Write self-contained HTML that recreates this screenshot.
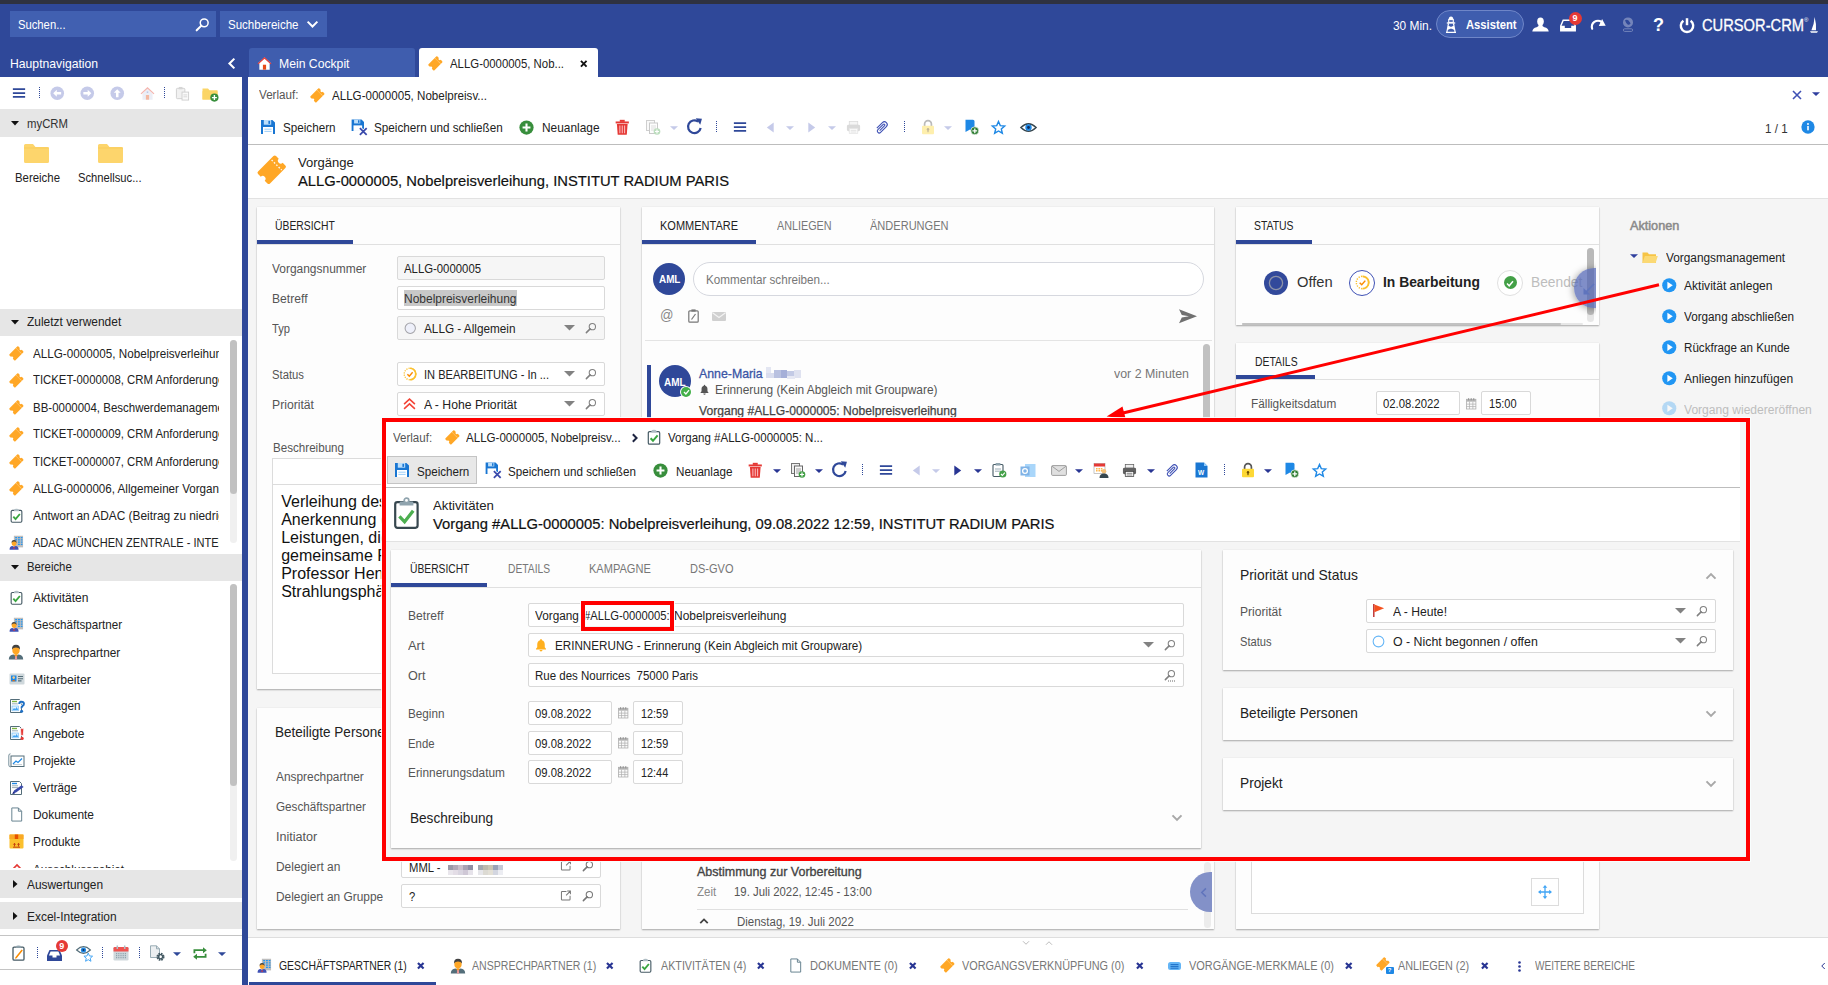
<!DOCTYPE html><html><head><meta charset="utf-8"><title>CURSOR-CRM</title><style>
html,body{margin:0;padding:0;}
body{width:1828px;height:985px;overflow:hidden;position:relative;background:#f5f5f5;font-family:"Liberation Sans",sans-serif;}
.a{position:absolute;}
.t{position:absolute;white-space:nowrap;transform-origin:0 50%;}
svg{overflow:visible}
</style></head><body>
<div class="a" style="left:0px;top:0px;width:1828px;height:4px;background:#2f3240;"></div>
<div class="a" style="left:0px;top:4px;width:1828px;height:73px;background:#2f4899;"></div>
<div class="a" style="left:10px;top:11px;width:206px;height:26px;background:#4160b1;"></div>
<div class="t" style="left:18px;top:18px;font-size:13px;line-height:13px;color:#fff;transform:scaleX(0.8648);">Suchen...</div>
<svg class="a" style="left:194.50px;top:16.50px;" width="15" height="15" viewBox="0 0 16 16"><circle cx="9.8" cy="6.2" r="4.2" fill="none" stroke="#fff" stroke-width="1.6"/><path d="M6.8 9.2 1.8 14.2" stroke="#fff" stroke-width="2.2" stroke-linecap="round"/></svg>
<div class="a" style="left:220px;top:11px;width:107px;height:26px;background:#4160b1;"></div>
<div class="t" style="left:227.5px;top:18px;font-size:13px;line-height:13px;color:#fff;transform:scaleX(0.8867);">Suchbereiche</div>
<svg class="a" style="left:306.00px;top:17.50px;" width="13" height="13" viewBox="0 0 16 16"><path d="M2 4.5 8 10.5 14 4.5" fill="none" stroke="#fff" stroke-width="2.4" transform="rotate(0 8 8)"/></svg>
<div class="t" style="left:1392.6px;top:19px;font-size:13px;line-height:13px;color:#fff;transform:scaleX(0.9148);">30 Min.</div>
<div class="a" style="left:1436px;top:10px;width:88px;height:28px;background:#3f5dae;border:1px solid #6f86c8;box-sizing:border-box;border-radius:14px;"></div>
<svg class="a" style="left:1445.00px;top:15.80px;" width="12" height="17" viewBox="0 0 12 17"><path d="M3.600 3.600Q3.800 .700 6 .600 8.200 .700 8.400 3.600z" fill="#fff"/><rect x="3.700" y="3.600" width="4.600" height="2.800" fill="none" stroke="#fff" stroke-width="1.100"/><path d="M1.800 7h8.400" stroke="#fff" stroke-width="1.300"/><path d="M3.500 7.400 1.900 16M8.500 7.400 10.100 16M1 16.300h10M3.200 10.200 9.600 13.400M8.800 10.200 2.400 13.400" fill="none" stroke="#fff" stroke-width="1.200"/></svg>
<div class="t" style="left:1465.5px;top:18px;font-size:13px;line-height:13px;color:#fff;transform:scaleX(0.8629);font-weight:700;">Assistent</div>
<svg class="a" style="left:1531.50px;top:16.80px;" width="17" height="15" viewBox="0 0 17 15"><ellipse cx="8.500" cy="4.600" rx="3.300" ry="4" fill="#fff"/><path d="M.3 14.600Q.6 11 4.600 10.200 6.800 9.600 6.800 7.500h3.400Q10.200 9.600 12.400 10.200 16.400 11 16.700 14.600z" fill="#fff"/></svg>
<svg class="a" style="left:1559.50px;top:19.00px;" width="16" height="13" viewBox="0 0 16 13"><path d="M3.200 1.200h9.600l2.400 5.600v5H.8v-5z" fill="none" stroke="#fff" stroke-width="1.500"/><path d="M.8 6.800h4v2.100h6.400V6.800h4v5H.8z" fill="#fff"/></svg>
<div class="a" style="left:1569px;top:12px;width:12.5px;height:12.5px;background:#e53935;border-radius:7px;"></div>
<div class="t" style="left:1572.6px;top:14px;font-size:9px;line-height:9px;color:#fff;transform:scaleX(1.0000);font-weight:700;">9</div>
<svg class="a" style="left:1590.50px;top:18.00px;" width="15" height="13" viewBox="0 0 15 13"><g transform="rotate(16 7.500 6.500)"><path d="M2.600 12.400Q.2 8.600 2.800 5.200 5.600 1.800 10 3.200" fill="none" stroke="#fff" stroke-width="2.100" stroke-linecap="round"/><path d="M9.400 .2 14.800 5.800 8.200 7.800z" fill="#fff"/></g></svg>
<svg class="a" style="left:1621.50px;top:16.50px;" width="12" height="15" viewBox="0 0 12 15"><g opacity=".33"><circle cx="6" cy="5.400" r="5" fill="#fff"/><path d="M3 3.200Q5 2 6.400 3.400T8.600 6.200Q7 8.600 5.400 7.200T3 3.200z" fill="#2f4899"/><rect x="1.400" y="11.800" width="9.200" height="2.600" rx="1.200" fill="none" stroke="#fff" stroke-width="1"/></g></svg>
<div class="t" style="left:1652.5px;top:15px;font-size:19px;line-height:19px;color:#fff;transform:scaleX(0.9500);font-weight:700;">?</div>
<svg class="a" style="left:1678.70px;top:16.80px;" width="16" height="16" viewBox="0 0 16 16"><path d="M4.400 3.800A6.200 6.200 0 1 0 11.600 3.800" fill="none" stroke="#fff" stroke-width="2.400"/><path d="M8 1.200v7" stroke="#fff" stroke-width="2.500"/></svg>
<div class="t" style="left:1701.5px;top:17px;font-size:16.5px;line-height:16.5px;color:#fff;transform:scaleX(0.8903);-webkit-text-stroke:0.3px #fff;">CURSOR-CRM</div>
<div class="t" style="left:1804px;top:17px;font-size:6px;line-height:6px;color:#fff;transform:scaleX(1.0000);">®</div>
<svg class="a" style="left:1809.50px;top:17.00px;" width="8" height="16" viewBox="0 0 8 16"><path d="M4.6 0Q6.5 7 6 13.2H1.4Q4.2 7 4.6 0z" fill="#fff"/><path d="M0 14.2h8l-1 1.6H1z" fill="#fff"/></svg>
<div class="t" style="left:10.3px;top:57px;font-size:13px;line-height:13px;color:#fff;transform:scaleX(0.9376);">Hauptnavigation</div>
<svg class="a" style="left:225.00px;top:57.00px;" width="13" height="13" viewBox="0 0 16 16"><path d="M2 4.5 8 10.5 14 4.5" fill="none" stroke="#fff" stroke-width="2.6" transform="rotate(90 8 8)"/></svg>
<div class="a" style="left:249px;top:48px;width:166px;height:29px;background:#3f5dae;border-radius:3px 3px 0 0;"></div>
<svg class="a" style="left:257.00px;top:56.00px;" width="15" height="15" viewBox="0 0 16 16"><path d="M8 1.200 0.800 8h1.700v6.600h11V8h1.700z" fill="#fff"/><path d="M8 1 .6 8l.9.9L8 2.800l6.500 6.100.9-.9z" fill="#e53935"/><rect x="6.300" y="9.300" width="3.400" height="5.300" fill="#e64a19"/></svg>
<div class="t" style="left:279px;top:57px;font-size:13px;line-height:13px;color:#fff;transform:scaleX(0.9382);">Mein Cockpit</div>
<div class="a" style="left:419px;top:48px;width:179px;height:29px;background:#fff;border-radius:3px 3px 0 0;"></div>
<svg class="a" style="left:427.64px;top:56.14px;" width="14.723926380368097" height="14.723926380368097" viewBox="0 0 16 16"><g transform="rotate(-45 8 8)"><path d="M2.1 3.4H13.9Q14.9 3.4 14.9 4.4V6.5A1.5 1.5 0 0 0 14.9 9.5V11.6Q14.9 12.6 13.9 12.6H2.1Q1.1 12.6 1.1 11.6V9.5A1.5 1.5 0 0 0 1.1 6.5V4.4Q1.1 3.4 2.1 3.4Z" fill="#ffa726"/><path d="M11.7 4.2v7.8" stroke="#fff" stroke-width=".75" stroke-dasharray=".9 .9" opacity=".9"/></g></svg>
<div class="t" style="left:449.5px;top:57px;font-size:13px;line-height:13px;color:#222;transform:scaleX(0.8763);">ALLG-0000005, Nob...</div>
<svg class="a" style="left:579.55px;top:59.75px;" width="7.5" height="7.5" viewBox="0 0 8 8"><path d="M1 1 7 7M7 1 1 7" stroke="#111" stroke-width="2"/></svg>
<div class="a" style="left:0px;top:77px;width:242px;height:908px;background:#fff;"></div>
<div class="a" style="left:242px;top:77px;width:6px;height:908px;background:#2f4899;"></div>
<svg class="a" style="left:11.70px;top:85.60px;" width="14" height="14" viewBox="0 0 16 16"><path d="M1 3.5h14M1 8h14M1 12.5h14" stroke="#2f4899" stroke-width="2"/></svg>
<div class="a" style="left:39px;top:87px;width:1px;height:11px;background:repeating-linear-gradient(to bottom,#2f4899 0,#2f4899 1px,transparent 1px,transparent 2px)"></div>
<svg class="a" style="left:49.75px;top:85.75px;" width="14.5" height="14.5" viewBox="0 0 16 16"><circle cx="8" cy="8" r="7.5" fill="#c5cae9"/><path d="M3.5 8 7.5 4.2v2.4h4.8v2.8H7.5v2.4z" fill="#fff" transform="rotate(0 8 8)"/></svg>
<svg class="a" style="left:79.75px;top:85.75px;" width="14.5" height="14.5" viewBox="0 0 16 16"><circle cx="8" cy="8" r="7.5" fill="#c5cae9"/><path d="M3.5 8 7.5 4.2v2.4h4.8v2.8H7.5v2.4z" fill="#fff" transform="rotate(180 8 8)"/></svg>
<svg class="a" style="left:109.75px;top:85.75px;" width="14.5" height="14.5" viewBox="0 0 16 16"><circle cx="8" cy="8" r="7.5" fill="#c5cae9"/><path d="M3.5 8 7.5 4.2v2.4h4.8v2.8H7.5v2.4z" fill="#fff" transform="rotate(90 8 8)"/></svg>
<svg class="a" style="left:139.50px;top:85.50px;" width="15" height="15" viewBox="0 0 16 16"><path d="M2.600 8V14.600h10.800V8L8 2.800z" fill="#eceef6"/><path d="M8 1 .6 8l.9.9L8 2.800l6.500 6.100.9-.9z" fill="#f4b6b0"/><rect x="6.300" y="9.600" width="3.400" height="5" fill="#f3b9a3"/><rect x="7.200" y="5.800" width="1.600" height="1.600" fill="#b9c6e6"/></svg>
<div class="a" style="left:164px;top:87px;width:1px;height:11px;background:repeating-linear-gradient(to bottom,#2f4899 0,#2f4899 1px,transparent 1px,transparent 2px)"></div>
<svg class="a" style="left:174.50px;top:86.00px;" width="15" height="15" viewBox="0 0 16 16"><rect x="1.5" y="2.5" width="9" height="11" rx="1" fill="#f1f1f1" stroke="#cfcfcf"/><rect x="4" y="1" width="4" height="2.5" fill="#d5d5d5"/><rect x="7.5" y="6.5" width="7" height="8.5" fill="#fafafa" stroke="#cfcfcf"/><path d="M9 9.5h4M9 11.5h4" stroke="#d5d5d5"/></svg>
<svg class="a" style="left:202.00px;top:85.50px;" width="16" height="16" viewBox="0 0 16 16"><g opacity="1"><path d="M.5 2.5h5.5l1.5 1.8H15.5V13.5H.5z" fill="#fbd567"/><path d="M.5 5.2h15V13.5H.5z" fill="#fbd567"/></g><circle cx="12.4" cy="11.6" r="4.1" fill="#388e3c"/><path d="M12.4 9.1v5M9.900 11.600h5" stroke="#fff" stroke-width="1.4"/></svg>
<div class="a" style="left:0px;top:109px;width:242px;height:28px;background:#e6e6e6;"></div>
<svg class="a" style="left:10.50px;top:119.00px;" width="8" height="8" viewBox="0 0 8 8"><path d="M0 2h8L4 6.5z" fill="#111" transform="rotate(0 4 4)"/></svg>
<div class="t" style="left:26.7px;top:117px;font-size:13px;line-height:13px;color:#333;transform:scaleX(0.8735);">myCRM</div>
<svg class="a" style="left:24.00px;top:143.00px;" width="25" height="21" viewBox="0 0 25 21"><path d="M0 2.5Q0 1 1.5 1H9l2.5 3H23.5Q25 4 25 5.5V18.5Q25 20 23.5 20H1.5Q0 20 0 18.5z" fill="#fdd56c"/><path d="M0 5h25" stroke="#f7ca57" stroke-width=".8"/></svg>
<svg class="a" style="left:98.00px;top:143.00px;" width="25" height="21" viewBox="0 0 25 21"><path d="M0 2.5Q0 1 1.5 1H9l2.5 3H23.5Q25 4 25 5.5V18.5Q25 20 23.5 20H1.5Q0 20 0 18.5z" fill="#fdd56c"/><path d="M0 5h25" stroke="#f7ca57" stroke-width=".8"/></svg>
<div class="t" style="left:14.5px;top:172px;font-size:12.5px;line-height:12.5px;color:#222;transform:scaleX(0.9122);">Bereiche</div>
<div class="t" style="left:78px;top:172px;font-size:12.5px;line-height:12.5px;color:#222;transform:scaleX(0.8961);">Schnellsuc...</div>
<div class="a" style="left:0px;top:308.5px;width:242px;height:27px;background:#e6e6e6;"></div>
<svg class="a" style="left:10.50px;top:318.00px;" width="8" height="8" viewBox="0 0 8 8"><path d="M0 2h8L4 6.5z" fill="#111" transform="rotate(0 4 4)"/></svg>
<div class="t" style="left:26.8px;top:315px;font-size:13px;line-height:13px;color:#222;transform:scaleX(0.9181);">Zuletzt verwendet</div>
<div class="a" style="left:0;top:336px;width:218.5px;height:217px;overflow:hidden">
<div class="t" style="left:32.5px;top:11px;font-size:13px;line-height:13px;color:#222;transform:scaleX(0.8986);">ALLG-0000005, Nobelpreisverleihung</div>
<div class="t" style="left:32.5px;top:37px;font-size:13px;line-height:13px;color:#222;transform:scaleX(0.8738);">TICKET-0000008, CRM Anforderungen</div>
<div class="t" style="left:32.5px;top:65px;font-size:13px;line-height:13px;color:#222;transform:scaleX(0.8833);">BB-0000004, Beschwerdemanagement</div>
<div class="t" style="left:32.5px;top:91px;font-size:13px;line-height:13px;color:#222;transform:scaleX(0.8738);">TICKET-0000009, CRM Anforderungen</div>
<div class="t" style="left:32.5px;top:119px;font-size:13px;line-height:13px;color:#222;transform:scaleX(0.8738);">TICKET-0000007, CRM Anforderungen</div>
<div class="t" style="left:32.5px;top:146px;font-size:13px;line-height:13px;color:#222;transform:scaleX(0.8935);">ALLG-0000006, Allgemeiner Vorgang</div>
<div class="t" style="left:32.5px;top:173px;font-size:13px;line-height:13px;color:#222;transform:scaleX(0.9126);">Antwort an ADAC (Beitrag zu niedrig)</div>
<div class="t" style="left:32.5px;top:200px;font-size:13px;line-height:13px;color:#222;transform:scaleX(0.8476);">ADAC MÜNCHEN ZENTRALE - INTER</div>
</div>
<svg class="a" style="left:8.84px;top:345.74px;" width="14.723926380368097" height="14.723926380368097" viewBox="0 0 16 16"><g transform="rotate(-45 8 8)"><path d="M2.1 3.4H13.9Q14.9 3.4 14.9 4.4V6.5A1.5 1.5 0 0 0 14.9 9.5V11.6Q14.9 12.6 13.9 12.6H2.1Q1.1 12.6 1.1 11.6V9.5A1.5 1.5 0 0 0 1.1 6.5V4.4Q1.1 3.4 2.1 3.4Z" fill="#ffa726"/><path d="M11.7 4.2v7.8" stroke="#fff" stroke-width=".75" stroke-dasharray=".9 .9" opacity=".9"/></g></svg>
<svg class="a" style="left:8.84px;top:372.54px;" width="14.723926380368097" height="14.723926380368097" viewBox="0 0 16 16"><g transform="rotate(-45 8 8)"><path d="M2.1 3.4H13.9Q14.9 3.4 14.9 4.4V6.5A1.5 1.5 0 0 0 14.9 9.5V11.6Q14.9 12.6 13.9 12.6H2.1Q1.1 12.6 1.1 11.6V9.5A1.5 1.5 0 0 0 1.1 6.5V4.4Q1.1 3.4 2.1 3.4Z" fill="#ffa726"/><path d="M11.7 4.2v7.8" stroke="#fff" stroke-width=".75" stroke-dasharray=".9 .9" opacity=".9"/></g></svg>
<svg class="a" style="left:8.84px;top:399.74px;" width="14.723926380368097" height="14.723926380368097" viewBox="0 0 16 16"><g transform="rotate(-45 8 8)"><path d="M2.1 3.4H13.9Q14.9 3.4 14.9 4.4V6.5A1.5 1.5 0 0 0 14.9 9.5V11.6Q14.9 12.6 13.9 12.6H2.1Q1.1 12.6 1.1 11.6V9.5A1.5 1.5 0 0 0 1.1 6.5V4.4Q1.1 3.4 2.1 3.4Z" fill="#ffa726"/><path d="M11.7 4.2v7.8" stroke="#fff" stroke-width=".75" stroke-dasharray=".9 .9" opacity=".9"/></g></svg>
<svg class="a" style="left:8.84px;top:426.54px;" width="14.723926380368097" height="14.723926380368097" viewBox="0 0 16 16"><g transform="rotate(-45 8 8)"><path d="M2.1 3.4H13.9Q14.9 3.4 14.9 4.4V6.5A1.5 1.5 0 0 0 14.9 9.5V11.6Q14.9 12.6 13.9 12.6H2.1Q1.1 12.6 1.1 11.6V9.5A1.5 1.5 0 0 0 1.1 6.5V4.4Q1.1 3.4 2.1 3.4Z" fill="#ffa726"/><path d="M11.7 4.2v7.8" stroke="#fff" stroke-width=".75" stroke-dasharray=".9 .9" opacity=".9"/></g></svg>
<svg class="a" style="left:8.84px;top:453.74px;" width="14.723926380368097" height="14.723926380368097" viewBox="0 0 16 16"><g transform="rotate(-45 8 8)"><path d="M2.1 3.4H13.9Q14.9 3.4 14.9 4.4V6.5A1.5 1.5 0 0 0 14.9 9.5V11.6Q14.9 12.6 13.9 12.6H2.1Q1.1 12.6 1.1 11.6V9.5A1.5 1.5 0 0 0 1.1 6.5V4.4Q1.1 3.4 2.1 3.4Z" fill="#ffa726"/><path d="M11.7 4.2v7.8" stroke="#fff" stroke-width=".75" stroke-dasharray=".9 .9" opacity=".9"/></g></svg>
<svg class="a" style="left:8.84px;top:481.34px;" width="14.723926380368097" height="14.723926380368097" viewBox="0 0 16 16"><g transform="rotate(-45 8 8)"><path d="M2.1 3.4H13.9Q14.9 3.4 14.9 4.4V6.5A1.5 1.5 0 0 0 14.9 9.5V11.6Q14.9 12.6 13.9 12.6H2.1Q1.1 12.6 1.1 11.6V9.5A1.5 1.5 0 0 0 1.1 6.5V4.4Q1.1 3.4 2.1 3.4Z" fill="#ffa726"/><path d="M11.7 4.2v7.8" stroke="#fff" stroke-width=".75" stroke-dasharray=".9 .9" opacity=".9"/></g></svg>
<svg class="a" style="left:8.70px;top:508.00px;" width="15" height="15" viewBox="0 0 16 16"><rect x="2.300" y="2.600" width="11.400" height="12.600" rx="1.300" fill="#fff" stroke="#455a64" stroke-width="1.200"/><path d="M5.400 3.400V2Q5.400 .700 8 .700T10.600 2V3.400z" fill="#b0bec5"/><path d="M4.600 9.200 7 11.800 11.600 6.400" fill="none" stroke="#3aa640" stroke-width="2"/></svg>
<svg class="a" style="left:8.70px;top:535.20px;" width="15" height="15" viewBox="0 0 16 16"><rect x="5.200" y=".800" width="9.800" height="12.400" fill="#bdbdbd"/><path d="M6.600 2.800h2M9.600 2.800h2M12.600 2.800h1.800M9.600 5.200h2M12.600 5.200h1.800M9.600 7.600h2M12.600 7.600h1.800M9.600 10h2M12.600 10h1.800M6.600 5.200h2" stroke="#2196f3" stroke-width="1.200"/><path d="M.6 15.600Q.6 12 3.600 11.800L5.400 12.400 7.200 11.800Q10.200 12 10.200 15.600z" fill="#3f51b5"/><path d="M5 12.400h.8l.3 2.600H4.700z" fill="#e53935"/><ellipse cx="5.400" cy="8.800" rx="2.500" ry="2.900" fill="#ffa726"/><path d="M2.800 8.400Q2.600 5.400 5.400 5.400T8 8.400Q7.200 7 5.400 7T2.800 8.400z" fill="#424242"/></svg>
<div class="a" style="left:229.5px;top:340px;width:7.5px;height:203px;background:#f0f0f0;border-radius:4px;"></div>
<div class="a" style="left:229.5px;top:340px;width:7.5px;height:153.5px;background:#c1c1c1;border-radius:4px;"></div>
<div class="a" style="left:0px;top:553.5px;width:242px;height:27px;background:#e6e6e6;"></div>
<svg class="a" style="left:10.50px;top:563.00px;" width="8" height="8" viewBox="0 0 8 8"><path d="M0 2h8L4 6.5z" fill="#111" transform="rotate(0 4 4)"/></svg>
<div class="t" style="left:26.8px;top:560px;font-size:13px;line-height:13px;color:#222;transform:scaleX(0.8711);">Bereiche</div>
<svg class="a" style="left:8.90px;top:589.80px;" width="15" height="15" viewBox="0 0 16 16"><rect x="2.300" y="2.600" width="11.400" height="12.600" rx="1.300" fill="#fff" stroke="#455a64" stroke-width="1.200"/><path d="M5.400 3.400V2Q5.400 .700 8 .700T10.600 2V3.400z" fill="#b0bec5"/><path d="M4.600 9.200 7 11.800 11.600 6.400" fill="none" stroke="#3aa640" stroke-width="2"/></svg>
<div class="t" style="left:32.8px;top:591px;font-size:13px;line-height:13px;color:#222;transform:scaleX(0.9254);">Aktivitäten</div>
<svg class="a" style="left:8.90px;top:616.90px;" width="15" height="15" viewBox="0 0 16 16"><rect x="5.200" y=".800" width="9.800" height="12.400" fill="#bdbdbd"/><path d="M6.600 2.800h2M9.600 2.800h2M12.600 2.800h1.800M9.600 5.200h2M12.600 5.200h1.800M9.600 7.600h2M12.600 7.600h1.800M9.600 10h2M12.600 10h1.800M6.600 5.200h2" stroke="#2196f3" stroke-width="1.200"/><path d="M.6 15.600Q.6 12 3.600 11.800L5.400 12.400 7.200 11.800Q10.200 12 10.200 15.600z" fill="#3f51b5"/><path d="M5 12.400h.8l.3 2.600H4.700z" fill="#e53935"/><ellipse cx="5.400" cy="8.800" rx="2.500" ry="2.900" fill="#ffa726"/><path d="M2.800 8.400Q2.600 5.400 5.400 5.400T8 8.400Q7.200 7 5.400 7T2.800 8.400z" fill="#424242"/></svg>
<div class="t" style="left:32.8px;top:618px;font-size:13px;line-height:13px;color:#222;transform:scaleX(0.8925);">Geschäftspartner</div>
<svg class="a" style="left:8.40px;top:644.00px;" width="16" height="16" viewBox="0 0 16 16"><path d="M.8 15.6Q.8 10.6 5.4 10.4L8 11.2l2.6-.8Q15.2 10.6 15.2 15.6z" fill="#546e7a"/><path d="M6.6 10.2h2.8V12L8 13 6.600 12z" fill="#ff9800"/><path d="M7.3 11.8h1.400l.5 3.800H6.800z" fill="#ef9a9a"/><ellipse cx="8" cy="6" rx="3.700" ry="4.300" fill="#ffa726"/><path d="M4.100 5.600Q3.600 .800 8 .800T11.900 5.600Q11 3.400 8 3.400T4.100 5.600z" fill="#424242"/></svg>
<div class="t" style="left:32.8px;top:646px;font-size:13px;line-height:13px;color:#222;transform:scaleX(0.9072);">Ansprechpartner</div>
<svg class="a" style="left:8.60px;top:672.60px;" width="16" height="12" viewBox="0 0 16 12"><rect x=".5" y=".5" width="15" height="11" rx="1" fill="#cfd8dc"/><rect x="2" y="2.5" width="5.5" height="6" fill="#1e88e5"/><circle cx="4.7" cy="4.6" r="1.3" fill="#ffcc80"/><path d="M2.8 8.3q1.9-2.6 3.8 0z" fill="#ef6c00"/><path d="M9 3.5h5M9 5.7h5M9 7.9h3.5" stroke="#546e7a" stroke-width="1.1"/></svg>
<div class="t" style="left:32.8px;top:673px;font-size:13px;line-height:13px;color:#222;transform:scaleX(0.9428);">Mitarbeiter</div>
<svg class="a" style="left:8.80px;top:697.80px;" width="16" height="16" viewBox="0 0 16 16"><path d="M1.5 1.5h9l2 2V14.5h-11z" fill="#fff" stroke="#546e7a" stroke-width="1"/><path d="M3 3.5h5" stroke="#7cb342" stroke-width="1.4"/><path d="M3 5.8h6" stroke="#90a4ae" stroke-width=".9"/><rect x="3" y="8" width="6.5" height="4.8" fill="#e3f2fd" stroke="#64b5f6" stroke-width=".6"/><path d="M3.5 12 5 10l1.2 1 1.6-2 1.4 3z" fill="#42a5f5"/><path d="M10.300 6Q10.300 3.700 12.600 3.700T14.900 5.800Q14.900 7.100 13.600 7.900T12.600 10.200" fill="none" stroke="#fff" stroke-width="3.400"/><path d="M10.300 6Q10.300 3.700 12.600 3.700T14.900 5.800Q14.900 7.100 13.600 7.900T12.600 10.200" fill="none" stroke="#1e6fc4" stroke-width="2"/><circle cx="12.600" cy="13.200" r="1.500" fill="#1e6fc4"/></svg>
<div class="t" style="left:32.8px;top:699px;font-size:13px;line-height:13px;color:#222;transform:scaleX(0.9021);">Anfragen</div>
<svg class="a" style="left:8.80px;top:725.00px;" width="16" height="16" viewBox="0 0 16 16"><path d="M1.5 1.5h9l2 2V14.5h-11z" fill="#fff" stroke="#546e7a" stroke-width="1"/><path d="M3 3.5h5" stroke="#7cb342" stroke-width="1.4"/><path d="M3 5.8h6" stroke="#90a4ae" stroke-width=".9"/><rect x="3" y="8" width="6.5" height="4.8" fill="#e3f2fd" stroke="#64b5f6" stroke-width=".6"/><path d="M3.5 12 5 10l1.2 1 1.6-2 1.4 3z" fill="#42a5f5"/><path d="M11.400 3.600h3.400l-.6 7h-2.200z" fill="#e53935" stroke="#fff" stroke-width=".7"/><circle cx="13.100" cy="13.400" r="1.600" fill="#e53935"/></svg>
<div class="t" style="left:32.8px;top:727px;font-size:13px;line-height:13px;color:#222;transform:scaleX(0.9252);">Angebote</div>
<svg class="a" style="left:8.10px;top:752.60px;" width="17" height="15" viewBox="0 0 17 15"><path d="M2.5.8Q.5 .8 .8 3V12q0 2 2 2" fill="none" stroke="#78909c" stroke-width="1"/><rect x="3" y="3" width="13" height="10.5" fill="#fff" stroke="#546e7a" stroke-width="1"/><path d="M5 11 8 8l2 1.5 4-4" fill="none" stroke="#1e88e5" stroke-width="1.2"/><path d="M5 11.6h9" stroke="#b0bec5" stroke-width=".8"/></svg>
<div class="t" style="left:32.8px;top:754px;font-size:13px;line-height:13px;color:#222;transform:scaleX(0.8890);">Projekte</div>
<svg class="a" style="left:8.80px;top:779.60px;" width="16" height="16" viewBox="0 0 16 16"><path d="M1.5 1.5h9l2 2V14.5h-11z" fill="#fff" stroke="#546e7a" stroke-width="1"/><path d="M3 3.5h5" stroke="#1e88e5" stroke-width="1.4"/><path d="M3 5.8h6M3 7.6h6" stroke="#90a4ae" stroke-width=".9"/><path d="M4 13.4 5 10.4 12.6 5.2 14.6 7 7 12.4z" fill="#3949ab"/><path d="M3.2 14 6 13.6 4.4 11.6z" fill="#1a237e"/></svg>
<div class="t" style="left:32.8px;top:781px;font-size:13px;line-height:13px;color:#222;transform:scaleX(0.8932);">Verträge</div>
<svg class="a" style="left:8.90px;top:807.30px;" width="15" height="15" viewBox="0 0 16 16"><path d="M3 1h7l3.5 3.5V15H3z" fill="#fff" stroke="#607d8b" stroke-width="1"/><path d="M10 1v3.5h3.5" fill="none" stroke="#607d8b" stroke-width="1"/></svg>
<div class="t" style="left:32.8px;top:808px;font-size:13px;line-height:13px;color:#222;transform:scaleX(0.9175);">Dokumente</div>
<svg class="a" style="left:8.90px;top:834.40px;" width="15" height="15" viewBox="0 0 15 15"><rect x=".5" y=".5" width="14" height="14" rx="1" fill="#fbc02d"/><rect x=".5" y=".5" width="14" height="4.5" fill="#f9a825"/><rect x="5.8" y=".5" width="3.4" height="4.5" fill="#e65100"/><path d="M5.5 9.5v3M9.5 9.5v3M4.4 10.6 5.5 9.3l1.1 1.3M8.4 10.6 9.5 9.3l1.1 1.3M4 13.2h7" fill="none" stroke="#bf360c" stroke-width=".9"/></svg>
<div class="t" style="left:32.8px;top:835px;font-size:13px;line-height:13px;color:#222;transform:scaleX(0.9090);">Produkte</div>
<div class="a" style="left:0;top:858px;width:125px;height:9.5px;overflow:hidden">
<svg class="a" style="left:9.50px;top:5.50px;" width="14" height="8" viewBox="0 0 14 8"><path d="M1 7 7 1l6 6" fill="none" stroke="#e53935" stroke-width="1.6"/></svg>
<div class="t" style="left:32.8px;top:5px;font-size:13px;line-height:13px;color:#222;transform:scaleX(0.9000);">Ausschlussgebiete</div>
</div>
<div class="a" style="left:229.5px;top:584px;width:7.5px;height:277px;background:#f0f0f0;border-radius:4px;"></div>
<div class="a" style="left:229.5px;top:584px;width:7.5px;height:202px;background:#c1c1c1;border-radius:4px;"></div>
<div class="a" style="left:0px;top:870px;width:242px;height:28px;background:#e6e6e6;"></div>
<svg class="a" style="left:10.50px;top:880.30px;" width="8" height="8" viewBox="0 0 8 8"><path d="M0 2h8L4 6.5z" fill="#111" transform="rotate(-90 4 4)"/></svg>
<div class="t" style="left:26.8px;top:878px;font-size:13px;line-height:13px;color:#222;transform:scaleX(0.9144);">Auswertungen</div>
<div class="a" style="left:0px;top:902px;width:242px;height:27px;background:#e6e6e6;"></div>
<svg class="a" style="left:10.50px;top:912.00px;" width="8" height="8" viewBox="0 0 8 8"><path d="M0 2h8L4 6.5z" fill="#111" transform="rotate(-90 4 4)"/></svg>
<div class="t" style="left:26.8px;top:910px;font-size:13px;line-height:13px;color:#222;transform:scaleX(0.9184);">Excel-Integration</div>
<div class="a" style="left:0px;top:935px;width:242px;height:1px;background:#c4c4c4;"></div>
<div class="a" style="left:0px;top:969px;width:242px;height:1px;background:#c4c4c4;"></div>
<svg class="a" style="left:12.30px;top:945.40px;" width="13" height="16" viewBox="0 0 13 16"><rect x="1" y="2.200" width="11" height="13" rx="1.200" fill="#fff" stroke="#455a64" stroke-width="1.300"/><path d="M4 2.800V1.600Q4 .600 6.500 .600T9 1.600V2.800z" fill="#90a4ae"/><path d="M3.400 12.200 9.600 4.600l1.200 1L4.600 13.200l-1.600.5z" fill="#fb8c00"/></svg>
<div class="a" style="left:37px;top:947px;width:1px;height:11px;background:repeating-linear-gradient(to bottom,#2f4899 0,#2f4899 1px,transparent 1px,transparent 2px)"></div>
<svg class="a" style="left:47.00px;top:949.00px;" width="15" height="12" viewBox="0 0 15 12"><path d="M2.5 1h10L15 6.5V12H0V6.5z" fill="#2f4899"/><path d="M3.6 2.5h7.8l1.7 4H9.5v2h-4v-2H1.9z" fill="#fff"/></svg>
<div class="a" style="left:55.7px;top:940px;width:12px;height:12px;background:#e53935;border-radius:6px;"></div>
<div class="t" style="left:59.2px;top:942px;font-size:9px;line-height:9px;color:#fff;transform:scaleX(1.0000);font-weight:700;">9</div>
<svg class="a" style="left:76.30px;top:945.00px;" width="15" height="10" viewBox="0 0 15 10"><path d="M.6 5Q7.500-1.600 14.400 5 7.500 11.600 .6 5z" fill="#fff" stroke="#546e7a" stroke-width="1.100"/><circle cx="7.500" cy="5" r="2.600" fill="#1e88e5"/><circle cx="7.500" cy="5" r="1.100" fill="#0d2b5c"/></svg>
<svg class="a" style="left:83.35px;top:951.95px;" width="10.5" height="10.5" viewBox="0 0 16 16"><path d="M8 1.6 9.9 6l4.7.4-3.6 3.1 1.1 4.6L8 11.7 3.9 14.1 5 9.5 1.4 6.4 6.1 6z" fill="none" stroke="#42a5f5" stroke-width="1.5" stroke-linejoin="miter"/></svg>
<div class="a" style="left:102px;top:947px;width:1px;height:11px;background:repeating-linear-gradient(to bottom,#2f4899 0,#2f4899 1px,transparent 1px,transparent 2px)"></div>
<svg class="a" style="left:113.00px;top:945.00px;" width="16" height="16" viewBox="0 0 16 16"><rect x=".5" y="2" width="15" height="13.500" rx="1.300" fill="#cfd8dc"/><path d="M.5 6.500V3.300Q.5 2 1.800 2H14.200Q15.500 2 15.500 3.300V6.500z" fill="#ef5350"/><path d="M3 8.600h10.500M3 10.600h10.500M3 12.600h10.500" stroke="#90a4ae" stroke-width="1.100" stroke-dasharray="1.200 1"/><path d="M4.300 .5v3.400M11.700 .5v3.400" stroke="#b0bec5" stroke-width="1.500"/></svg>
<div class="a" style="left:139px;top:947px;width:1px;height:11px;background:repeating-linear-gradient(to bottom,#2f4899 0,#2f4899 1px,transparent 1px,transparent 2px)"></div>
<svg class="a" style="left:148.50px;top:945.40px;" width="16" height="16" viewBox="0 0 16 16"><path d="M1.500 .8h6l3 3V12.500h-9z" fill="#eceff1" stroke="#90a4ae" stroke-width=".9"/><path d="M7.500 .8v3h3" fill="none" stroke="#90a4ae" stroke-width=".9"/><circle cx="11.500" cy="11.800" r="2.900" fill="none" stroke="#455a64" stroke-width="2.300" stroke-dasharray="1.500 .78"/><circle cx="11.500" cy="11.800" r="2.100" fill="none" stroke="#455a64" stroke-width="1.300"/></svg>
<svg class="a" style="left:173.00px;top:949.80px;" width="8" height="8" viewBox="0 0 8 8"><path d="M0 2.2h8L4 6z" fill="#2f4899"/></svg>
<svg class="a" style="left:193.30px;top:946.90px;" width="14" height="13" viewBox="0 0 14 13"><path d="M1.400 6.200V3.200h9.600" fill="none" stroke="#388e3c" stroke-width="1.800"/><path d="M10 .2 13.800 3.200 10 6.200z" fill="#388e3c"/><path d="M12.600 6.800V9.800H3" fill="none" stroke="#388e3c" stroke-width="1.800"/><path d="M4 6.800 .2 9.800 4 12.800z" fill="#388e3c"/></svg>
<svg class="a" style="left:218.00px;top:949.80px;" width="8" height="8" viewBox="0 0 8 8"><path d="M0 2.2h8L4 6z" fill="#2f4899"/></svg>
<div class="a" style="left:248px;top:77px;width:1580px;height:121px;background:#fff;"></div>
<div class="a" style="left:248px;top:144px;width:1580px;height:1px;background:#bdbdbd;"></div>
<div class="a" style="left:248px;top:198px;width:1580px;height:1px;background:#e2e2e2;"></div>
<div class="t" style="left:259px;top:89px;font-size:12.5px;line-height:12.5px;color:#555;transform:scaleX(0.9319);">Verlauf:</div>
<svg class="a" style="left:310.14px;top:87.64px;" width="14.723926380368097" height="14.723926380368097" viewBox="0 0 16 16"><g transform="rotate(-45 8 8)"><path d="M2.1 3.4H13.9Q14.9 3.4 14.9 4.4V6.5A1.5 1.5 0 0 0 14.9 9.5V11.6Q14.9 12.6 13.9 12.6H2.1Q1.1 12.6 1.1 11.6V9.5A1.5 1.5 0 0 0 1.1 6.5V4.4Q1.1 3.4 2.1 3.4Z" fill="#ffa726"/><path d="M11.7 4.2v7.8" stroke="#fff" stroke-width=".75" stroke-dasharray=".9 .9" opacity=".9"/></g></svg>
<div class="t" style="left:331.5px;top:89px;font-size:13px;line-height:13px;color:#222;transform:scaleX(0.8912);">ALLG-0000005, Nobelpreisv...</div>
<svg class="a" style="left:1791.70px;top:90.20px;" width="10" height="10" viewBox="0 0 10 10"><path d="M1 1 9 9M9 1 1 9" stroke="#3f51b5" stroke-width="1.6"/></svg>
<svg class="a" style="left:1812.30px;top:89.50px;" width="8" height="8" viewBox="0 0 8 8"><path d="M0 2.2h8L4 6z" fill="#303f9f"/></svg>
<svg class="a" style="left:259.50px;top:119.30px;" width="16" height="16" viewBox="0 0 16 16"><path d="M1 1h11.400L15 3.600V15H1z" fill="#1976d2"/><rect x="3.800" y="1" width="7.400" height="4.700" fill="#bbdefb"/><rect x="8.400" y="1.800" width="1.700" height="3.100" fill="#1976d2"/><rect x="3" y="8" width="10" height="7" fill="#fff"/><path d="M4.400 10.200h7.200M4.400 12.400h7.200" stroke="#90caf9" stroke-width=".9"/></svg>
<div class="t" style="left:282.5px;top:121px;font-size:13px;line-height:13px;color:#222;transform:scaleX(0.8968);">Speichern</div>
<svg class="a" style="left:351.25px;top:119.25px;" width="16.5" height="16.5" viewBox="0 0 16 16"><path d="M.6 .6h9.600L12.600 3V11.600H.6z" fill="#1976d2"/><rect x="3" y=".6" width="6" height="3.700" fill="#bbdefb"/><rect x="6.800" y="1.200" width="1.400" height="2.500" fill="#1976d2"/><rect x="2.400" y="6.200" width="8.400" height="5.400" fill="#fff"/><path d="M7.300 10.800 12.200 15.500 7.300 15.500 9.750 13.150z" fill="#fff" opacity="0"/><path d="M8.600 8.800 15.200 15.400M15.200 8.800 8.600 15.400" stroke="#fff" stroke-width="3.200"/><path d="M8.600 8.800 15.200 15.400M15.200 8.800 8.600 15.400" stroke="#3949ab" stroke-width="1.700"/></svg>
<div class="t" style="left:373.8px;top:121px;font-size:13px;line-height:13px;color:#222;transform:scaleX(0.8994);">Speichern und schließen</div>
<svg class="a" style="left:518.50px;top:119.80px;" width="15" height="15" viewBox="0 0 16 16"><circle cx="8" cy="8" r="7.6" fill="#388e3c"/><path d="M8 3.8v8.4M3.8 8h8.4" stroke="#fff" stroke-width="2.2"/></svg>
<div class="t" style="left:541.5px;top:121px;font-size:13px;line-height:13px;color:#222;transform:scaleX(0.9143);">Neuanlage</div>
<svg class="a" style="left:613.75px;top:118.75px;" width="16.5" height="16.5" viewBox="0 0 16 16"><path d="M2.800 4.800h10.400l-.8 10.400H3.600z" fill="#e53935"/><path d="M1.600 2.400h12.800v1.900H1.600z" fill="#e53935"/><rect x="5.600" y=".8" width="4.800" height="2" fill="#e53935"/><path d="M5.700 6.300v7.400M8 6.300v7.400M10.300 6.300v7.400" stroke="#ffcdd2" stroke-width="1" opacity=".9"/></svg>
<svg class="a" style="left:644.50px;top:119.00px;" width="16" height="16" viewBox="0 0 16 16"><g opacity="0.35"><rect x="1.5" y="1.5" width="8" height="10" fill="#eee" stroke="#777"/><rect x="4.5" y="4" width="8" height="10.5" fill="#fafafa" stroke="#666"/><path d="M6 7h5M6 9h5M6 11h3" stroke="#888" stroke-width=".8"/><circle cx="12" cy="12.5" r="3.3" fill="#43a047"/><path d="M12 10.5v4M10 12.5h4" stroke="#fff" stroke-width="1.2"/></g></svg>
<svg class="a" style="left:669.50px;top:123.50px;" width="8" height="8" viewBox="0 0 8 8"><path d="M0 2.2h8L4 6z" fill="#c5cae9"/></svg>
<svg class="a" style="left:686.30px;top:118.00px;" width="17" height="17" viewBox="0 0 16 16"><path d="M13.800 9.400A6 6 0 1 1 11.400 3.300" fill="none" stroke="#2f4899" stroke-width="2.100"/><path d="M9.200 .2 15 .8 13.400 6.400z" fill="#2f4899"/></svg>
<div class="a" style="left:716px;top:121px;width:1px;height:11px;background:repeating-linear-gradient(to bottom,#2f4899 0,#2f4899 1px,transparent 1px,transparent 2px)"></div>
<svg class="a" style="left:732.80px;top:119.80px;" width="14" height="14" viewBox="0 0 16 16"><path d="M1 3.5h14M1 8h14M1 12.5h14" stroke="#2f4899" stroke-width="2"/></svg>
<svg class="a" style="left:764.50px;top:121.50px;" width="11" height="11" viewBox="0 0 12 12"><path d="M2 6 9.5 .5V11.5z" fill="#c5cae9" transform="rotate(0 6 6)"/></svg>
<svg class="a" style="left:786.00px;top:123.50px;" width="8" height="8" viewBox="0 0 8 8"><path d="M0 2.2h8L4 6z" fill="#c5cae9"/></svg>
<svg class="a" style="left:805.50px;top:121.50px;" width="11" height="11" viewBox="0 0 12 12"><path d="M2 6 9.5 .5V11.5z" fill="#c5cae9" transform="rotate(180 6 6)"/></svg>
<svg class="a" style="left:828.00px;top:123.50px;" width="8" height="8" viewBox="0 0 8 8"><path d="M0 2.2h8L4 6z" fill="#c5cae9"/></svg>
<svg class="a" style="left:845.50px;top:119.50px;" width="15" height="15" viewBox="0 0 16 16"><g opacity="0.55"><rect x="3.5" y="1.5" width="9" height="4" fill="#eee" stroke="#bdbdbd" stroke-width=".8"/><rect x="1" y="5" width="14" height="7" rx="1.5" fill="#bdbdbd"/><rect x="3.5" y="9" width="9" height="5.5" fill="#fafafa" stroke="#cfcfcf" stroke-width=".8"/><path d="M5 11h6M5 12.8h6" stroke="#bdbdbd" stroke-width=".8"/></g></svg>
<svg class="a" style="left:874.00px;top:119.00px;" width="16" height="16" viewBox="0 0 16 16"><g transform="rotate(45 8 8)"><path d="M5.2 12.5V4.6a2.8 2.8 0 0 1 5.6 0v8.2a1.9 1.9 0 0 1-3.8 0V5.2a.95.95 0 0 1 1.9 0v7" fill="none" stroke="#3f51b5" stroke-width="1.1"/></g></svg>
<div class="a" style="left:904px;top:121px;width:1px;height:11px;background:repeating-linear-gradient(to bottom,#2f4899 0,#2f4899 1px,transparent 1px,transparent 2px)"></div>
<svg class="a" style="left:919.80px;top:118.50px;" width="16" height="16" viewBox="0 0 16 16"><g opacity="0.4"><path d="M4.6 7V5a3.4 3.4 0 0 1 6.8 0v2" fill="none" stroke="#555" stroke-width="1.7"/><rect x="2" y="6.8" width="12" height="8.4" rx="1" fill="#fdd835"/><circle cx="8" cy="10.2" r="1.2" fill="#6d4c00"/><rect x="7.4" y="10.5" width="1.2" height="2.7" fill="#6d4c00"/></g></svg>
<svg class="a" style="left:944.40px;top:123.50px;" width="8" height="8" viewBox="0 0 8 8"><path d="M0 2.2h8L4 6z" fill="#c5cae9"/></svg>
<svg class="a" style="left:962.50px;top:119.00px;" width="16" height="16" viewBox="0 0 16 16"><path d="M2.5 .8h7.5q1.5 0 1.5 1.5V13L7 10.6 2.5 13z" fill="#1e88e5"/><circle cx="11.8" cy="11.8" r="4" fill="#2e7d32" stroke="#fff" stroke-width=".7"/><path d="M11.8 9.400v4.800M9.400 11.800h4.800" stroke="#fff" stroke-width="1.300"/></svg>
<svg class="a" style="left:991.30px;top:119.50px;" width="15" height="15" viewBox="0 0 16 16"><path d="M8 1.6 9.9 6l4.7.4-3.6 3.1 1.1 4.6L8 11.7 3.9 14.1 5 9.5 1.4 6.4 6.1 6z" fill="none" stroke="#1e88e5" stroke-width="1.5" stroke-linejoin="miter"/></svg>
<svg class="a" style="left:1020.20px;top:118.50px;" width="17" height="17" viewBox="0 0 16 16"><path d="M.8 8Q8 .8 15.2 8 8 15.2 .8 8z" fill="#fff" stroke="#37474f" stroke-width="1.3"/><circle cx="8" cy="8" r="3" fill="#1e88e5"/><circle cx="8" cy="8" r="1.3" fill="#0d2b5c"/></svg>
<div class="t" style="left:1764.6px;top:122px;font-size:13.5px;line-height:13.5px;color:#333;transform:scaleX(0.8604);">1 / 1</div>
<svg class="a" style="left:1800.70px;top:120.30px;" width="14" height="14" viewBox="0 0 16 16"><circle cx="8" cy="8" r="7.6" fill="#1e88e5"/><rect x="7.1" y="6.8" width="1.8" height="5" fill="#fff"/><circle cx="8" cy="4.6" r="1.1" fill="#fff"/></svg>
<svg class="a" style="left:257.28px;top:155.28px;" width="29.447852760736193" height="29.447852760736193" viewBox="0 0 16 16"><g transform="rotate(-45 8 8)"><path d="M2.1 3.4H13.9Q14.9 3.4 14.9 4.4V6.5A1.5 1.5 0 0 0 14.9 9.5V11.6Q14.9 12.6 13.9 12.6H2.1Q1.1 12.6 1.1 11.6V9.5A1.5 1.5 0 0 0 1.1 6.5V4.4Q1.1 3.4 2.1 3.4Z" fill="#ffa726"/><path d="M11.7 4.2v7.8" stroke="#fff" stroke-width=".75" stroke-dasharray=".9 .9" opacity=".9"/></g></svg>
<div class="t" style="left:298.2px;top:156px;font-size:13px;line-height:13px;color:#222;transform:scaleX(1.0024);">Vorgänge</div>
<div class="t" style="left:298.2px;top:173px;font-size:15.5px;line-height:15.5px;color:#111;transform:scaleX(0.9523);-webkit-text-stroke:0.2px #111;">ALLG-0000005, Nobelpreisverleihung, INSTITUT RADIUM PARIS</div>
<div class="a" style="left:257px;top:207px;width:363px;height:482px;background:#fdfdfd;box-shadow:0 1px 1.5px rgba(0,0,0,.30),0 0 1px rgba(0,0,0,.10);"></div>
<div class="a" style="left:257px;top:243.5px;width:363px;height:1px;background:#e0e0e0;"></div>
<div class="a" style="left:257px;top:240.3px;width:96px;height:3.6px;background:#2f4899;"></div>
<div class="t" style="left:275.2px;top:220px;font-size:12.5px;line-height:12.5px;color:#222;transform:scaleX(0.8279);">ÜBERSICHT</div>
<div class="t" style="left:272px;top:263px;font-size:12.5px;line-height:12.5px;color:#555;transform:scaleX(0.9558);">Vorgangsnummer</div>
<div class="a" style="left:397px;top:256px;width:208px;height:24px;background:#f6f6f6;border:1px solid #d9d9d9;box-sizing:border-box;border-radius:2px;"></div>
<div class="t" style="left:404px;top:263px;font-size:12.5px;line-height:12.5px;color:#222;transform:scaleX(0.9082);">ALLG-0000005</div>
<div class="t" style="left:272px;top:293px;font-size:12.5px;line-height:12.5px;color:#555;transform:scaleX(0.9701);">Betreff</div>
<div class="a" style="left:397px;top:286px;width:208px;height:24px;background:#fff;border:1px solid #d9d9d9;box-sizing:border-box;border-radius:2px;"></div>
<div class="a" style="left:404px;top:290px;width:113px;height:15.5px;background:#c8c8c8;"></div>
<div class="t" style="left:404px;top:293px;font-size:12.5px;line-height:12.5px;color:#333;transform:scaleX(0.9581);">Nobelpreisverleihung</div>
<div class="t" style="left:272px;top:323px;font-size:12.5px;line-height:12.5px;color:#555;transform:scaleX(0.8935);">Typ</div>
<div class="a" style="left:397px;top:316px;width:208px;height:24px;background:#f6f6f6;border:1px solid #d9d9d9;box-sizing:border-box;border-radius:2px;"></div>
<svg class="a" style="left:403.55px;top:321.75px;" width="12.5" height="12.5" viewBox="0 0 16 16"><circle cx="8" cy="8" r="6.6" fill="#eef0fa" stroke="#a3a3a8" stroke-width="1.3"/></svg>
<div class="t" style="left:424px;top:323px;font-size:12.5px;line-height:12.5px;color:#222;transform:scaleX(0.9407);">ALLG - Allgemein</div>
<svg class="a" style="left:564.10px;top:325.25px;" width="11" height="5.5" viewBox="0 0 12 6"><path d="M0 0h12L6 6z" fill="#828282"/></svg>
<svg class="a" style="left:585.10px;top:322.00px;" width="12" height="12" viewBox="0 0 16 16"><circle cx="9.8" cy="6.2" r="4.2" fill="none" stroke="#808080" stroke-width="1.4"/><path d="M6.8 9.2 1.8 14.2" stroke="#808080" stroke-width="2.0" stroke-linecap="round"/></svg>
<div class="t" style="left:272px;top:369px;font-size:12.5px;line-height:12.5px;color:#555;transform:scaleX(0.9030);">Status</div>
<div class="a" style="left:397px;top:362px;width:208px;height:24px;background:#fff;border:1px solid #d9d9d9;box-sizing:border-box;border-radius:2px;"></div>
<svg class="a" style="left:402.80px;top:367.00px;" width="14" height="14" viewBox="0 0 16 16"><circle cx="8" cy="8" r="6.600" fill="none" stroke="#fbc02d" stroke-width="1.500" stroke-dasharray="1.300 1.300"/><path d="M8 1.400A6.600 6.600 0 0 1 8 14.600" fill="none" stroke="#fbc02d" stroke-width="1.900"/><path d="M5 8.200 7.200 10.400 11 6" fill="none" stroke="#fb8c00" stroke-width="1.600"/></svg>
<div class="t" style="left:424px;top:369px;font-size:12.5px;line-height:12.5px;color:#222;transform:scaleX(0.8865);">IN BEARBEITUNG - In ...</div>
<svg class="a" style="left:564.10px;top:371.25px;" width="11" height="5.5" viewBox="0 0 12 6"><path d="M0 0h12L6 6z" fill="#828282"/></svg>
<svg class="a" style="left:585.10px;top:368.00px;" width="12" height="12" viewBox="0 0 16 16"><circle cx="9.8" cy="6.2" r="4.2" fill="none" stroke="#808080" stroke-width="1.4"/><path d="M6.8 9.2 1.8 14.2" stroke="#808080" stroke-width="2.0" stroke-linecap="round"/></svg>
<div class="t" style="left:272px;top:399px;font-size:12.5px;line-height:12.5px;color:#555;transform:scaleX(0.9753);">Priorität</div>
<div class="a" style="left:397px;top:392px;width:208px;height:24px;background:#fff;border:1px solid #d9d9d9;box-sizing:border-box;border-radius:2px;"></div>
<svg class="a" style="left:403.30px;top:398.30px;" width="13" height="12" viewBox="0 0 12 11"><path d="M1 5.6 6 1l5 4.6M1 10 6 5.4l5 4.6" fill="none" stroke="#f44336" stroke-width="1.400"/></svg>
<div class="t" style="left:424px;top:399px;font-size:12.5px;line-height:12.5px;color:#222;transform:scaleX(0.9772);">A - Hohe Priorität</div>
<svg class="a" style="left:564.10px;top:401.25px;" width="11" height="5.5" viewBox="0 0 12 6"><path d="M0 0h12L6 6z" fill="#828282"/></svg>
<svg class="a" style="left:585.10px;top:398.00px;" width="12" height="12" viewBox="0 0 16 16"><circle cx="9.8" cy="6.2" r="4.2" fill="none" stroke="#808080" stroke-width="1.4"/><path d="M6.8 9.2 1.8 14.2" stroke="#808080" stroke-width="2.0" stroke-linecap="round"/></svg>
<div class="t" style="left:272.5px;top:442px;font-size:12.5px;line-height:12.5px;color:#555;transform:scaleX(0.9289);">Beschreibung</div>
<div class="a" style="left:272px;top:458px;width:333px;height:216px;background:#fff;border:1px solid #dcdcdc;box-sizing:border-box;"></div>
<div class="a" style="left:272px;top:484px;width:333px;height:1px;background:#dcdcdc;"></div>
<div class="t" style="left:281.2px;top:494px;font-size:16px;line-height:16px;color:#111;transform:scaleX(1.0000);">Verleihung des Nobelpreises in</div>
<div class="t" style="left:281.2px;top:512px;font-size:16px;line-height:16px;color:#111;transform:scaleX(1.0000);">Anerkennung der außerordentlichen</div>
<div class="t" style="left:281.2px;top:530px;font-size:16px;line-height:16px;color:#111;transform:scaleX(1.0000);">Leistungen, die sie durch ihre</div>
<div class="t" style="left:281.2px;top:548px;font-size:16px;line-height:16px;color:#111;transform:scaleX(1.0000);">gemeinsame Forschung über die von</div>
<div class="t" style="left:281.2px;top:566px;font-size:16px;line-height:16px;color:#111;transform:scaleX(1.0000);">Professor Henri Becquerel entdeckten</div>
<div class="t" style="left:281.2px;top:584px;font-size:16px;line-height:16px;color:#111;transform:scaleX(1.0000);">Strahlungsphänomene erbracht haben</div>
<div class="a" style="left:257px;top:707.5px;width:363px;height:221.5px;background:#fdfdfd;box-shadow:0 1px 1.5px rgba(0,0,0,.30),0 0 1px rgba(0,0,0,.10);"></div>
<div class="t" style="left:274.8px;top:725px;font-size:14.5px;line-height:14.5px;color:#222;transform:scaleX(0.9320);">Beteiligte Personen</div>
<div class="t" style="left:276.2px;top:771px;font-size:12.5px;line-height:12.5px;color:#555;transform:scaleX(0.9502);">Ansprechpartner</div>
<div class="t" style="left:276.2px;top:801px;font-size:12.5px;line-height:12.5px;color:#555;transform:scaleX(0.9367);">Geschäftspartner</div>
<div class="t" style="left:276.2px;top:831px;font-size:12.5px;line-height:12.5px;color:#555;transform:scaleX(1.0076);">Initiator</div>
<div class="t" style="left:276.2px;top:861px;font-size:12.5px;line-height:12.5px;color:#555;transform:scaleX(0.9541);">Delegiert an</div>
<div class="t" style="left:276.2px;top:891px;font-size:12.5px;line-height:12.5px;color:#555;transform:scaleX(0.9515);">Delegiert an Gruppe</div>
<div class="a" style="left:401px;top:764px;width:200px;height:24px;background:#fff;border:1px solid #d9d9d9;box-sizing:border-box;border-radius:2px;"></div>
<svg class="a" style="left:560.25px;top:770.25px;" width="11.5" height="11.5" viewBox="0 0 16 16"><path d="M9 2H3Q2 2 2 3v10q0 1 1 1h10q1 0 1-1V8" fill="none" stroke="#777" stroke-width="1.4"/><path d="M8.5 7.5 14 2M10 1.5h4.5V6" fill="none" stroke="#777" stroke-width="1.4"/></svg>
<svg class="a" style="left:581.50px;top:770.00px;" width="12" height="12" viewBox="0 0 16 16"><circle cx="9.8" cy="6.2" r="4.2" fill="none" stroke="#777" stroke-width="1.4"/><path d="M6.8 9.2 1.8 14.2" stroke="#777" stroke-width="2.0" stroke-linecap="round"/></svg>
<div class="a" style="left:401px;top:794px;width:200px;height:24px;background:#fff;border:1px solid #d9d9d9;box-sizing:border-box;border-radius:2px;"></div>
<svg class="a" style="left:560.25px;top:800.25px;" width="11.5" height="11.5" viewBox="0 0 16 16"><path d="M9 2H3Q2 2 2 3v10q0 1 1 1h10q1 0 1-1V8" fill="none" stroke="#777" stroke-width="1.4"/><path d="M8.5 7.5 14 2M10 1.5h4.5V6" fill="none" stroke="#777" stroke-width="1.4"/></svg>
<svg class="a" style="left:581.50px;top:800.00px;" width="12" height="12" viewBox="0 0 16 16"><circle cx="9.8" cy="6.2" r="4.2" fill="none" stroke="#777" stroke-width="1.4"/><path d="M6.8 9.2 1.8 14.2" stroke="#777" stroke-width="2.0" stroke-linecap="round"/></svg>
<div class="a" style="left:401px;top:824px;width:200px;height:24px;background:#fff;border:1px solid #d9d9d9;box-sizing:border-box;border-radius:2px;"></div>
<svg class="a" style="left:560.25px;top:830.25px;" width="11.5" height="11.5" viewBox="0 0 16 16"><path d="M9 2H3Q2 2 2 3v10q0 1 1 1h10q1 0 1-1V8" fill="none" stroke="#777" stroke-width="1.4"/><path d="M8.5 7.5 14 2M10 1.5h4.5V6" fill="none" stroke="#777" stroke-width="1.4"/></svg>
<svg class="a" style="left:581.50px;top:830.00px;" width="12" height="12" viewBox="0 0 16 16"><circle cx="9.8" cy="6.2" r="4.2" fill="none" stroke="#777" stroke-width="1.4"/><path d="M6.8 9.2 1.8 14.2" stroke="#777" stroke-width="2.0" stroke-linecap="round"/></svg>
<div class="a" style="left:401px;top:854px;width:200px;height:24px;background:#fff;border:1px solid #d9d9d9;box-sizing:border-box;border-radius:2px;"></div>
<svg class="a" style="left:560.25px;top:860.25px;" width="11.5" height="11.5" viewBox="0 0 16 16"><path d="M9 2H3Q2 2 2 3v10q0 1 1 1h10q1 0 1-1V8" fill="none" stroke="#777" stroke-width="1.4"/><path d="M8.5 7.5 14 2M10 1.5h4.5V6" fill="none" stroke="#777" stroke-width="1.4"/></svg>
<svg class="a" style="left:581.50px;top:860.00px;" width="12" height="12" viewBox="0 0 16 16"><circle cx="9.8" cy="6.2" r="4.2" fill="none" stroke="#777" stroke-width="1.4"/><path d="M6.8 9.2 1.8 14.2" stroke="#777" stroke-width="2.0" stroke-linecap="round"/></svg>
<div class="a" style="left:401px;top:884px;width:200px;height:24px;background:#fff;border:1px solid #d9d9d9;box-sizing:border-box;border-radius:2px;"></div>
<svg class="a" style="left:560.25px;top:890.25px;" width="11.5" height="11.5" viewBox="0 0 16 16"><path d="M9 2H3Q2 2 2 3v10q0 1 1 1h10q1 0 1-1V8" fill="none" stroke="#777" stroke-width="1.4"/><path d="M8.5 7.5 14 2M10 1.5h4.5V6" fill="none" stroke="#777" stroke-width="1.4"/></svg>
<svg class="a" style="left:581.50px;top:890.00px;" width="12" height="12" viewBox="0 0 16 16"><circle cx="9.8" cy="6.2" r="4.2" fill="none" stroke="#777" stroke-width="1.4"/><path d="M6.8 9.2 1.8 14.2" stroke="#777" stroke-width="2.0" stroke-linecap="round"/></svg>
<div class="t" style="left:408.5px;top:862px;font-size:12.5px;line-height:12.5px;color:#222;transform:scaleX(0.9014);">MML -</div>
<div class="a" style="left:448px;top:865px;width:5px;height:5px;background:#9a9aa8;"></div>
<div class="a" style="left:453px;top:865px;width:5px;height:5px;background:#b3a9b8;"></div>
<div class="a" style="left:458px;top:865px;width:5px;height:5px;background:#c9bfc9;"></div>
<div class="a" style="left:463px;top:865px;width:5px;height:5px;background:#a9a3b3;"></div>
<div class="a" style="left:468px;top:865px;width:5px;height:5px;background:#8f8fa3;"></div>
<div class="a" style="left:448px;top:870px;width:5px;height:5px;background:#e9e6ec;"></div>
<div class="a" style="left:453px;top:870px;width:5px;height:5px;background:#e3dde6;"></div>
<div class="a" style="left:458px;top:870px;width:5px;height:5px;background:#d9d5e0;"></div>
<div class="a" style="left:463px;top:870px;width:5px;height:5px;background:#cfc8d6;"></div>
<div class="a" style="left:468px;top:870px;width:5px;height:5px;background:#e6e3ea;"></div>
<div class="a" style="left:478px;top:865px;width:5px;height:5px;background:#a3a8b0;"></div>
<div class="a" style="left:483px;top:865px;width:5px;height:5px;background:#bdb9ad;"></div>
<div class="a" style="left:488px;top:865px;width:5px;height:5px;background:#c9c5b3;"></div>
<div class="a" style="left:493px;top:865px;width:5px;height:5px;background:#9aa3b8;"></div>
<div class="a" style="left:498px;top:865px;width:5px;height:5px;background:#c3c9d6;"></div>
<div class="a" style="left:478px;top:870px;width:5px;height:5px;background:#e6e6ea;"></div>
<div class="a" style="left:483px;top:870px;width:5px;height:5px;background:#dcdad3;"></div>
<div class="a" style="left:488px;top:870px;width:5px;height:5px;background:#e3e0d6;"></div>
<div class="a" style="left:493px;top:870px;width:5px;height:5px;background:#d3d6e0;"></div>
<div class="a" style="left:498px;top:870px;width:5px;height:5px;background:#ecedf2;"></div>
<div class="t" style="left:408.5px;top:891px;font-size:12.5px;line-height:12.5px;color:#222;transform:scaleX(0.9000);">?</div>
<div class="a" style="left:642px;top:207px;width:572px;height:722px;background:#fdfdfd;box-shadow:0 1px 1.5px rgba(0,0,0,.30),0 0 1px rgba(0,0,0,.10);"></div>
<div class="a" style="left:642px;top:243.5px;width:572px;height:1px;background:#e0e0e0;"></div>
<div class="a" style="left:642px;top:240.3px;width:114px;height:3.6px;background:#2f4899;"></div>
<div class="t" style="left:660.2px;top:220px;font-size:12.5px;line-height:12.5px;color:#222;transform:scaleX(0.8798);">KOMMENTARE</div>
<div class="t" style="left:776.7px;top:220px;font-size:12.5px;line-height:12.5px;color:#777;transform:scaleX(0.8637);">ANLIEGEN</div>
<div class="t" style="left:869.8px;top:220px;font-size:12.5px;line-height:12.5px;color:#777;transform:scaleX(0.8830);">ÄNDERUNGEN</div>
<div class="a" style="left:653px;top:263px;width:32px;height:32px;background:#2f4899;border-radius:16px;"></div>
<div class="t" style="left:658.6px;top:274px;font-size:10.5px;line-height:10.5px;color:#fff;transform:scaleX(0.9410);font-weight:700;">AML</div>
<div class="a" style="left:693px;top:262px;width:511px;height:34px;background:#fff;border:1px solid #d6d8df;box-sizing:border-box;border-radius:17px;"></div>
<div class="t" style="left:706.2px;top:273px;font-size:13px;line-height:13px;color:#777;transform:scaleX(0.8970);">Kommentar schreiben...</div>
<div class="t" style="left:660px;top:308px;font-size:14px;line-height:14px;color:#888;transform:scaleX(0.9500);">@</div>
<svg class="a" style="left:687.50px;top:308.80px;" width="11" height="14" viewBox="0 0 11 14"><rect x=".8" y="1.8" width="9.4" height="11.4" rx="1" fill="none" stroke="#777" stroke-width="1.2"/><rect x="3.4" y=".4" width="4.2" height="2.2" fill="#777"/><path d="M3.5 10.5 7.5 5" stroke="#777" stroke-width="1.2"/></svg>
<svg class="a" style="left:711.80px;top:311.50px;" width="14" height="9" viewBox="0 0 14 9"><rect width="14" height="9" rx="1" fill="#d0d0d0"/><path d="M.5 .8 7 5.5 13.5 .8" fill="none" stroke="#f3f3f3" stroke-width="1.1"/></svg>
<svg class="a" style="left:1178.50px;top:308.55px;" width="18" height="14.5" viewBox="0 0 18 14"><path d="M0 0 18 7 0 14 2.8 8.2 10 7 2.8 5.8z" fill="#707070"/></svg>
<div class="a" style="left:645px;top:340px;width:567px;height:1px;background:#e4e4e4;"></div>
<div class="a" style="left:1203.2px;top:343.5px;width:6.6px;height:90px;background:#c1c1c1;border-radius:4px;"></div>
<div class="a" style="left:647px;top:365px;width:4px;height:70px;background:#2f4899;"></div>
<div class="a" style="left:658.8px;top:365px;width:32px;height:32px;background:#2f4899;border-radius:16px;"></div>
<div class="t" style="left:664.4px;top:377px;font-size:10.5px;line-height:10.5px;color:#fff;transform:scaleX(0.9498);font-weight:700;">AML</div>
<div class="a" style="left:680px;top:386px;width:12px;height:12px;background:#fff;border-radius:6px;"></div>
<div class="a" style="left:681px;top:387px;width:10px;height:10px;background:#43b049;border-radius:5px;"></div>
<svg class="a" style="left:682.50px;top:389.00px;" width="7" height="6" viewBox="0 0 7 6"><path d="M1 3 2.9 5 6 1.2" fill="none" stroke="#fff" stroke-width="1.3"/></svg>
<div class="t" style="left:699.2px;top:367px;font-size:13px;line-height:13px;color:#3a55a5;transform:scaleX(0.9479);-webkit-text-stroke:0.3px #3a55a5;">Anne-Maria</div>
<div class="a" style="left:766px;top:367px;width:5px;height:6px;background:#e3e6f2;"></div>
<div class="a" style="left:766px;top:373px;width:8px;height:5px;background:#d9ddee;"></div>
<div class="a" style="left:774px;top:370px;width:7px;height:8px;background:#b9c1e0;"></div>
<div class="a" style="left:781px;top:370px;width:6px;height:8px;background:#a5afd8;"></div>
<div class="a" style="left:787px;top:371px;width:7px;height:7px;background:#c3cae5;"></div>
<div class="a" style="left:794px;top:370px;width:7px;height:8px;background:#dfe2f0;"></div>
<div class="a" style="left:787px;top:376px;width:8px;height:3px;background:#e6e8f3;"></div>
<div class="t" style="left:1114px;top:367px;font-size:13px;line-height:13px;color:#777;transform:scaleX(0.9522);">vor 2 Minuten</div>
<svg class="a" style="left:699.20px;top:383.90px;" width="11" height="11" viewBox="0 0 16 16"><path d="M8 1.2a1 1 0 0 1 1 1v.5c2.2.6 3.3 2.4 3.3 4.6v3.2l1.4 1.8v.7H2.3v-.7l1.4-1.8V7.3c0-2.2 1.1-4 3.3-4.6v-.5a1 1 0 0 1 1-1z" fill="#555"/><path d="M6.3 13.8h3.4a1.7 1.7 0 0 1-3.4 0z" fill="#555"/></svg>
<div class="t" style="left:715px;top:383px;font-size:13px;line-height:13px;color:#555;transform:scaleX(0.9137);">Erinnerung (Kein Abgleich mit Groupware)</div>
<div class="t" style="left:699.2px;top:404px;font-size:13px;line-height:13px;color:#444;transform:scaleX(0.9313);-webkit-text-stroke:0.25px #444;">Vorgang #ALLG-0000005: Nobelpreisverleihung</div>
<div class="t" style="left:697.3px;top:865px;font-size:13px;line-height:13px;color:#444;transform:scaleX(0.9617);-webkit-text-stroke:0.35px #444;">Abstimmung zur Vorbereitung</div>
<div class="t" style="left:697.3px;top:886px;font-size:12.5px;line-height:12.5px;color:#888;transform:scaleX(0.9263);">Zeit</div>
<div class="t" style="left:733.7px;top:886px;font-size:12.5px;line-height:12.5px;color:#555;transform:scaleX(0.9096);">19. Juli 2022, 12:45 - 13:00</div>
<div class="a" style="left:697px;top:908.5px;width:491px;height:1px;background:#e0e0e0;"></div>
<svg class="a" style="left:699.00px;top:916.00px;" width="10" height="10" viewBox="0 0 16 16"><path d="M2 4.5 8 10.5 14 4.5" fill="none" stroke="#444" stroke-width="2.9" transform="rotate(180 8 8)"/></svg>
<div class="t" style="left:737.2px;top:916px;font-size:12.5px;line-height:12.5px;color:#555;transform:scaleX(0.9185);">Dienstag, 19. Juli 2022</div>
<div class="a" style="left:1203.7px;top:862px;width:7px;height:66px;background:#ececec;border-radius:4px;"></div>
<div class="a" style="left:1190px;top:872px;width:22px;height:40px;overflow:hidden"><div class="a" style="left:0;top:0;width:40px;height:40px;border-radius:20px;background:#8391c8"></div></div>
<svg class="a" style="left:1198.00px;top:886.50px;" width="11" height="11" viewBox="0 0 16 16"><path d="M2 4.5 8 10.5 14 4.5" fill="none" stroke="#6074bc" stroke-width="2.2" transform="rotate(90 8 8)"/></svg>
<div class="a" style="left:1236px;top:207px;width:363px;height:118px;background:#fdfdfd;box-shadow:0 1px 1.5px rgba(0,0,0,.30),0 0 1px rgba(0,0,0,.10);"></div>
<div class="a" style="left:1236px;top:243.5px;width:363px;height:1px;background:#e0e0e0;"></div>
<div class="a" style="left:1236px;top:240.3px;width:76px;height:3.6px;background:#2f4899;"></div>
<div class="t" style="left:1254.3px;top:220px;font-size:12.5px;line-height:12.5px;color:#222;transform:scaleX(0.8324);">STATUS</div>
<div class="a" style="left:1263.9px;top:270.8px;width:24px;height:24px;background:#32499b;border-radius:12px;"></div>
<svg class="a" style="left:1267.90px;top:274.80px;" width="16" height="16" viewBox="0 0 16 16"><circle cx="8" cy="8" r="6.6" fill="none" stroke="#8d93a8" stroke-width="1.3"/></svg>
<div class="t" style="left:1297px;top:274px;font-size:15px;line-height:15px;color:#333;transform:scaleX(0.9803);">Offen</div>
<div class="a" style="left:1349px;top:269.8px;width:26px;height:26px;background:#fff;border:1px solid #3f51b5;box-sizing:border-box;border-radius:13px;"></div>
<svg class="a" style="left:1354.50px;top:275.30px;" width="15" height="15" viewBox="0 0 16 16"><circle cx="8" cy="8" r="6.600" fill="none" stroke="#fbc02d" stroke-width="1.500" stroke-dasharray="1.300 1.300"/><path d="M8 1.400A6.600 6.600 0 0 1 8 14.600" fill="none" stroke="#fbc02d" stroke-width="1.900"/><path d="M5 8.200 7.200 10.400 11 6" fill="none" stroke="#fb8c00" stroke-width="1.600"/></svg>
<div class="t" style="left:1383.4px;top:275px;font-size:14.5px;line-height:14.5px;color:#222;transform:scaleX(0.9546);font-weight:700;">In Bearbeitung</div>
<div class="a" style="left:1497px;top:269.8px;width:26px;height:26px;background:#fff;border:1px solid #e0e0e0;box-sizing:border-box;border-radius:13px;"></div>
<div class="a" style="left:1503.5px;top:276.3px;width:13px;height:13px;background:#43a047;border-radius:7px;"></div>
<svg class="a" style="left:1506.00px;top:279.50px;" width="8" height="7" viewBox="0 0 8 7"><path d="M1 3.5 3.2 5.8 7 1.3" fill="none" stroke="#fff" stroke-width="1.5"/></svg>
<div class="a" style="left:1531px;top:270px;width:56px;height:26px;overflow:hidden">
<div class="t" style="left:0.2px;top:4px;font-size:15px;line-height:15px;color:#bdbdbd;transform:scaleX(0.9180);">Beendet</div>
</div>
<div class="a" style="left:1587px;top:248px;width:7px;height:74px;background:#e6e6e6;border-radius:4px;"></div>
<div class="a" style="left:1587px;top:248px;width:7px;height:67px;background:#b9b9b9;border-radius:4px;"></div>
<div class="a" style="left:1560px;top:257px;width:36px;height:61px;overflow:hidden"><div class="a" style="left:14px;top:10.600px;width:40px;height:40px;border-radius:20px;background:rgba(86,104,181,.75);box-shadow:-1px 1px 7px rgba(0,0,0,.35)"></div></div>
<svg class="a" style="left:1581.50px;top:282.50px;" width="13" height="13" viewBox="0 0 13 13"><path d="M12 1 3 10" fill="none" stroke="#5f74bd" stroke-width="1.6"/><path d="M1.5 5V11.500H8z" fill="#5f74bd"/></svg>
<div class="a" style="left:1241.5px;top:322.5px;width:341px;height:2.5px;background:#e6e6e6;border-radius:2px;"></div>
<div class="a" style="left:1241.5px;top:322.5px;width:319px;height:2.5px;background:#c2c2c2;border-radius:2px;"></div>
<div class="a" style="left:1236px;top:343.3px;width:363px;height:586px;background:#fdfdfd;box-shadow:0 1px 1.5px rgba(0,0,0,.30),0 0 1px rgba(0,0,0,.10);"></div>
<div class="a" style="left:1236px;top:379px;width:363px;height:1px;background:#e0e0e0;"></div>
<div class="a" style="left:1236px;top:375.2px;width:79px;height:3.6px;background:#2f4899;"></div>
<div class="t" style="left:1254.5px;top:356px;font-size:12.5px;line-height:12.5px;color:#222;transform:scaleX(0.8325);">DETAILS</div>
<div class="t" style="left:1251.4px;top:398px;font-size:12.5px;line-height:12.5px;color:#555;transform:scaleX(0.9434);">Fälligkeitsdatum</div>
<div class="a" style="left:1376px;top:391px;width:84px;height:24px;background:#fff;border:1px solid #d9d9d9;box-sizing:border-box;border-radius:2px;"></div>
<div class="t" style="left:1383.4px;top:398px;font-size:12.5px;line-height:12.5px;color:#222;transform:scaleX(0.9048);">02.08.2022</div>
<svg class="a" style="left:1465.80px;top:396.70px;" width="10.4" height="13.0" viewBox="0 0 13 15"><rect x=".6" y="2.200" width="11.800" height="12.200" fill="#fafafa" stroke="#a6a6a6" stroke-width=".9"/><rect x=".6" y="2.200" width="11.800" height="3" fill="#b4b4b4"/><path d="M4.400 5.200V14.400M8.600 5.200V14.400M.6 8.300h11.800M.6 11.300h11.800" stroke="#b0b0b0" stroke-width=".9"/><path d="M3.300 .8v2.600M6.500 .8v2.600M9.700 .8v2.600" stroke="#8c8c8c" stroke-width="1.200"/></svg>
<div class="a" style="left:1481px;top:391px;width:50px;height:24px;background:#fff;border:1px solid #d9d9d9;box-sizing:border-box;border-radius:2px;"></div>
<div class="t" style="left:1488.8px;top:398px;font-size:12.5px;line-height:12.5px;color:#222;transform:scaleX(0.8824);">15:00</div>
<div class="a" style="left:1251.3px;top:840px;width:332.5px;height:73.5px;background:#fff;border:1px solid #dcdcdc;box-sizing:border-box;"></div>
<div class="a" style="left:1531px;top:878.4px;width:27.6px;height:27.2px;background:#fff;border:1px solid #dcdcdc;box-sizing:border-box;"></div>
<svg class="a" style="left:1538.00px;top:885.00px;" width="14" height="14" viewBox="0 0 14 14"><path d="M7 1v12M1 7h12" stroke="#42a5f5" stroke-width="1.3"/><path d="M7 0 9.3 2.8H4.7zM7 14 4.7 11.2h4.6zM0 7l2.8-2.3v4.6zM14 7l-2.8 2.3V4.7z" fill="#42a5f5"/></svg>
<div class="t" style="left:1630px;top:220px;font-size:12.5px;line-height:12.5px;color:#8a8a8a;transform:scaleX(1.0135);-webkit-text-stroke:0.5px #8a8a8a;">Aktionen</div>
<svg class="a" style="left:1630.00px;top:252.00px;" width="8" height="8" viewBox="0 0 8 8"><path d="M0 2.2h8L4 6z" fill="#2f3f9e"/></svg>
<svg class="a" style="left:1641.50px;top:251.00px;" width="16" height="13" viewBox="0 0 16 13"><path d="M.5 1.5h5l1.5 1.7H14V12H.5z" fill="#f6c445"/><path d="M.5 12 2.8 5h13L13.6 12z" fill="#fbd974"/></svg>
<div class="t" style="left:1665.6px;top:252px;font-size:12.5px;line-height:12.5px;color:#222;transform:scaleX(0.9470);">Vorgangsmanagement</div>
<svg class="a" style="left:1661.75px;top:277.75px;" width="14.5" height="14.5" viewBox="0 0 16 16"><g opacity="1"><circle cx="8" cy="8" r="7.800" fill="#2196f3"/><path d="M5.900 4 11.900 8 5.900 12z" fill="#fff"/></g></svg>
<div class="t" style="left:1684.2px;top:280px;font-size:12.5px;line-height:12.5px;color:#222;transform:scaleX(0.9649);">Aktivität anlegen</div>
<svg class="a" style="left:1661.75px;top:308.65px;" width="14.5" height="14.5" viewBox="0 0 16 16"><g opacity="1"><circle cx="8" cy="8" r="7.800" fill="#2196f3"/><path d="M5.900 4 11.900 8 5.900 12z" fill="#fff"/></g></svg>
<div class="t" style="left:1684.2px;top:311px;font-size:12.5px;line-height:12.5px;color:#222;transform:scaleX(0.9375);">Vorgang abschließen</div>
<svg class="a" style="left:1661.75px;top:339.55px;" width="14.5" height="14.5" viewBox="0 0 16 16"><g opacity="1"><circle cx="8" cy="8" r="7.800" fill="#2196f3"/><path d="M5.900 4 11.900 8 5.900 12z" fill="#fff"/></g></svg>
<div class="t" style="left:1684.2px;top:342px;font-size:12.5px;line-height:12.5px;color:#222;transform:scaleX(0.9284);">Rückfrage an Kunde</div>
<svg class="a" style="left:1661.75px;top:370.55px;" width="14.5" height="14.5" viewBox="0 0 16 16"><g opacity="1"><circle cx="8" cy="8" r="7.800" fill="#2196f3"/><path d="M5.900 4 11.900 8 5.900 12z" fill="#fff"/></g></svg>
<div class="t" style="left:1684.2px;top:373px;font-size:12.5px;line-height:12.5px;color:#222;transform:scaleX(0.9631);">Anliegen hinzufügen</div>
<svg class="a" style="left:1661.75px;top:401.45px;" width="14.5" height="14.5" viewBox="0 0 16 16"><g opacity="0.3"><circle cx="8" cy="8" r="7.800" fill="#2196f3"/><path d="M5.900 4 11.900 8 5.900 12z" fill="#fff"/></g></svg>
<div class="t" style="left:1684.2px;top:404px;font-size:12.5px;line-height:12.5px;color:#bdbdbd;transform:scaleX(0.9646);">Vorgang wiedereröffnen</div>
<div class="a" style="left:248px;top:937px;width:1580px;height:48px;background:#fff;"></div>
<div class="a" style="left:248px;top:936.5px;width:1580px;height:1px;background:#dedede;"></div>
<svg class="a" style="left:1022.40px;top:939.00px;" width="8" height="8" viewBox="0 0 16 16"><path d="M2 4.5 8 10.5 14 4.5" fill="none" stroke="#aaa" stroke-width="1.6" transform="rotate(0 8 8)"/></svg>
<svg class="a" style="left:1045.20px;top:939.00px;" width="8" height="8" viewBox="0 0 16 16"><path d="M2 4.5 8 10.5 14 4.5" fill="none" stroke="#aaa" stroke-width="1.6" transform="rotate(180 8 8)"/></svg>
<div class="a" style="left:248.8px;top:982px;width:187px;height:3px;background:#2f4899;"></div>
<svg class="a" style="left:256.50px;top:958.00px;" width="15" height="15" viewBox="0 0 16 16"><rect x="5.200" y=".800" width="9.800" height="12.400" fill="#bdbdbd"/><path d="M6.600 2.800h2M9.600 2.800h2M12.600 2.800h1.800M9.600 5.200h2M12.600 5.200h1.800M9.600 7.600h2M12.600 7.600h1.800M9.600 10h2M12.600 10h1.800M6.600 5.200h2" stroke="#2196f3" stroke-width="1.200"/><path d="M.6 15.600Q.6 12 3.600 11.800L5.400 12.400 7.200 11.800Q10.200 12 10.200 15.600z" fill="#3f51b5"/><path d="M5 12.400h.8l.3 2.600H4.700z" fill="#e53935"/><ellipse cx="5.400" cy="8.800" rx="2.500" ry="2.900" fill="#ffa726"/><path d="M2.800 8.400Q2.600 5.400 5.400 5.400T8 8.400Q7.200 7 5.400 7T2.800 8.400z" fill="#424242"/></svg>
<div class="t" style="left:279.4px;top:960px;font-size:12.5px;line-height:12.5px;color:#222;transform:scaleX(0.8314);">GESCHÄFTSPARTNER (1)</div>
<svg class="a" style="left:417.45px;top:961.75px;" width="7.5" height="7.5" viewBox="0 0 8 8"><path d="M1 1 7 7M7 1 1 7" stroke="#283593" stroke-width="2.3"/></svg>
<svg class="a" style="left:449.50px;top:957.50px;" width="16" height="16" viewBox="0 0 16 16"><path d="M.8 15.6Q.8 10.6 5.4 10.4L8 11.2l2.6-.8Q15.2 10.6 15.2 15.6z" fill="#546e7a"/><path d="M6.6 10.2h2.8V12L8 13 6.600 12z" fill="#ff9800"/><path d="M7.3 11.8h1.400l.5 3.800H6.800z" fill="#ef9a9a"/><ellipse cx="8" cy="6" rx="3.700" ry="4.300" fill="#ffa726"/><path d="M4.100 5.600Q3.600 .800 8 .800T11.900 5.600Q11 3.400 8 3.400T4.100 5.600z" fill="#424242"/></svg>
<div class="t" style="left:472px;top:960px;font-size:12.5px;line-height:12.5px;color:#777;transform:scaleX(0.8461);">ANSPRECHPARTNER (1)</div>
<svg class="a" style="left:606.45px;top:961.75px;" width="7.5" height="7.5" viewBox="0 0 8 8"><path d="M1 1 7 7M7 1 1 7" stroke="#283593" stroke-width="2.3"/></svg>
<svg class="a" style="left:638.20px;top:958.00px;" width="15" height="15" viewBox="0 0 16 16"><rect x="2.300" y="2.600" width="11.400" height="12.600" rx="1.300" fill="#fff" stroke="#455a64" stroke-width="1.200"/><path d="M5.400 3.400V2Q5.400 .700 8 .700T10.600 2V3.400z" fill="#b0bec5"/><path d="M4.600 9.200 7 11.800 11.600 6.400" fill="none" stroke="#3aa640" stroke-width="2"/></svg>
<div class="t" style="left:660.6px;top:960px;font-size:12.5px;line-height:12.5px;color:#777;transform:scaleX(0.8589);">AKTIVITÄTEN (4)</div>
<svg class="a" style="left:756.65px;top:961.75px;" width="7.5" height="7.5" viewBox="0 0 8 8"><path d="M1 1 7 7M7 1 1 7" stroke="#283593" stroke-width="2.3"/></svg>
<svg class="a" style="left:788.30px;top:958.00px;" width="15" height="15" viewBox="0 0 16 16"><path d="M3 1h7l3.5 3.5V15H3z" fill="#fff" stroke="#607d8b" stroke-width="1"/><path d="M10 1v3.5h3.5" fill="none" stroke="#607d8b" stroke-width="1"/></svg>
<div class="t" style="left:810.2px;top:960px;font-size:12.5px;line-height:12.5px;color:#777;transform:scaleX(0.8883);">DOKUMENTE (0)</div>
<svg class="a" style="left:908.85px;top:961.75px;" width="7.5" height="7.5" viewBox="0 0 8 8"><path d="M1 1 7 7M7 1 1 7" stroke="#283593" stroke-width="2.3"/></svg>
<svg class="a" style="left:940.34px;top:958.14px;" width="14.723926380368097" height="14.723926380368097" viewBox="0 0 16 16"><g transform="rotate(-45 8 8)"><path d="M2.1 3.4H13.9Q14.9 3.4 14.9 4.4V6.5A1.5 1.5 0 0 0 14.9 9.5V11.6Q14.9 12.6 13.9 12.6H2.1Q1.1 12.6 1.1 11.6V9.5A1.5 1.5 0 0 0 1.1 6.5V4.4Q1.1 3.4 2.1 3.4Z" fill="#ffa726"/><path d="M11.7 4.2v7.8" stroke="#fff" stroke-width=".75" stroke-dasharray=".9 .9" opacity=".9"/></g></svg>
<div class="t" style="left:962px;top:960px;font-size:12.5px;line-height:12.5px;color:#777;transform:scaleX(0.8687);">VORGANGSVERKNÜPFUNG (0)</div>
<svg class="a" style="left:1135.85px;top:961.75px;" width="7.5" height="7.5" viewBox="0 0 8 8"><path d="M1 1 7 7M7 1 1 7" stroke="#283593" stroke-width="2.3"/></svg>
<svg class="a" style="left:1167.40px;top:961.00px;" width="15" height="10" viewBox="0 0 15 10"><rect x="1" y="1" width="13" height="8" rx="2.5" fill="#64b5f6"/><path d="M3.5 3.6h8M3.5 5.4h8M3.5 7.2h8" stroke="#1565c0" stroke-width=".9"/></svg>
<div class="t" style="left:1188.9px;top:960px;font-size:12.5px;line-height:12.5px;color:#777;transform:scaleX(0.8766);">VORGÄNGE-MERKMALE (0)</div>
<svg class="a" style="left:1344.85px;top:961.75px;" width="7.5" height="7.5" viewBox="0 0 8 8"><path d="M1 1 7 7M7 1 1 7" stroke="#283593" stroke-width="2.3"/></svg>
<svg class="a" style="left:1375.63px;top:957.13px;" width="13.742331288343557" height="13.742331288343557" viewBox="0 0 16 16"><g transform="rotate(-45 8 8)"><path d="M2.1 3.4H13.9Q14.9 3.4 14.9 4.4V6.5A1.5 1.5 0 0 0 14.9 9.5V11.6Q14.9 12.6 13.9 12.6H2.1Q1.1 12.6 1.1 11.6V9.5A1.5 1.5 0 0 0 1.1 6.5V4.4Q1.1 3.4 2.1 3.4Z" fill="#ffa726"/><path d="M11.7 4.2v7.8" stroke="#fff" stroke-width=".75" stroke-dasharray=".9 .9" opacity=".9"/></g></svg>
<div class="a" style="left:1385.5px;top:967px;width:8px;height:6.5px;background:#1e88e5;border-radius:1px;"></div>
<div class="t" style="left:1387.8px;top:967px;font-size:6px;line-height:6px;color:#fff;transform:scaleX(1.0000);font-weight:700;">?</div>
<div class="t" style="left:1398.4px;top:960px;font-size:12.5px;line-height:12.5px;color:#777;transform:scaleX(0.8675);">ANLIEGEN (2)</div>
<svg class="a" style="left:1480.65px;top:961.75px;" width="7.5" height="7.5" viewBox="0 0 8 8"><path d="M1 1 7 7M7 1 1 7" stroke="#283593" stroke-width="2.3"/></svg>
<svg class="a" style="left:1518.20px;top:960.50px;" width="3" height="11" viewBox="0 0 3 11"><circle cx="1.5" cy="1.5" r="1.3" fill="#283593"/><circle cx="1.5" cy="5.5" r="1.3" fill="#283593"/><circle cx="1.5" cy="9.5" r="1.3" fill="#283593"/></svg>
<div class="t" style="left:1534.6px;top:960px;font-size:12.5px;line-height:12.5px;color:#777;transform:scaleX(0.8035);">WEITERE BEREICHE</div>
<svg class="a" style="left:1818.50px;top:962.00px;" width="8" height="8" viewBox="0 0 16 16"><path d="M2 4.5 8 10.5 14 4.5" fill="none" stroke="#283593" stroke-width="2" transform="rotate(90 8 8)"/></svg>
<svg class="a" style="left:0;top:0" width="1828" height="985"><path d="M1659 284.7 1122 413.2" stroke="#ff0000" stroke-width="3"/><path d="M1106.600 416.400 1122.500 406.600 1125.600 418.500z" fill="#ff0000"/></svg>
<div class="a" style="left:382px;top:418px;width:1368px;height:443px;background:#f5f5f5;border:4px solid #ff0000;box-sizing:border-box;box-shadow:0 0 0 1px rgba(248,255,255,.85);"></div>
<div class="a" style="left:386px;top:422px;width:1354px;height:119px;background:#fff;"></div>
<div class="a" style="left:386px;top:487px;width:1354px;height:1px;background:#bdbdbd;"></div>
<div class="a" style="left:386px;top:541px;width:1354px;height:1px;background:#e2e2e2;"></div>
<div class="t" style="left:393.4px;top:432px;font-size:12.5px;line-height:12.5px;color:#555;transform:scaleX(0.9225);">Verlauf:</div>
<svg class="a" style="left:444.64px;top:430.24px;" width="14.723926380368097" height="14.723926380368097" viewBox="0 0 16 16"><g transform="rotate(-45 8 8)"><path d="M2.1 3.4H13.9Q14.9 3.4 14.9 4.4V6.5A1.5 1.5 0 0 0 14.9 9.5V11.6Q14.9 12.6 13.9 12.6H2.1Q1.1 12.6 1.1 11.6V9.5A1.5 1.5 0 0 0 1.1 6.5V4.4Q1.1 3.4 2.1 3.4Z" fill="#ffa726"/><path d="M11.7 4.2v7.8" stroke="#fff" stroke-width=".75" stroke-dasharray=".9 .9" opacity=".9"/></g></svg>
<div class="t" style="left:465.8px;top:431px;font-size:13px;line-height:13px;color:#222;transform:scaleX(0.8894);">ALLG-0000005, Nobelpreisv...</div>
<svg class="a" style="left:629.70px;top:432.80px;" width="10" height="10" viewBox="0 0 16 16"><path d="M2 4.5 8 10.5 14 4.5" fill="none" stroke="#1c2340" stroke-width="3.2" transform="rotate(270 8 8)"/></svg>
<svg class="a" style="left:645.80px;top:429.20px;" width="16" height="16" viewBox="0 0 16 16"><rect x="2.300" y="2.600" width="11.400" height="12.600" rx="1.300" fill="#fff" stroke="#455a64" stroke-width="1.200"/><path d="M5.400 3.400V2Q5.400 .700 8 .700T10.600 2V3.400z" fill="#b0bec5"/><path d="M4.600 9.200 7 11.800 11.600 6.400" fill="none" stroke="#3aa640" stroke-width="2"/></svg>
<div class="t" style="left:668px;top:431px;font-size:13px;line-height:13px;color:#222;transform:scaleX(0.8862);">Vorgang #ALLG-0000005: N...</div>
<div class="a" style="left:387px;top:456px;width:90px;height:28px;background:#e8e8e8;border:1px solid #c4c4c4;box-sizing:border-box;"></div>
<svg class="a" style="left:393.80px;top:462.30px;" width="16" height="16" viewBox="0 0 16 16"><path d="M1 1h11.400L15 3.600V15H1z" fill="#1976d2"/><rect x="3.800" y="1" width="7.400" height="4.700" fill="#bbdefb"/><rect x="8.400" y="1.800" width="1.700" height="3.100" fill="#1976d2"/><rect x="3" y="8" width="10" height="7" fill="#fff"/><path d="M4.400 10.200h7.200M4.400 12.400h7.200" stroke="#90caf9" stroke-width=".9"/></svg>
<div class="t" style="left:416.8px;top:465px;font-size:13px;line-height:13px;color:#222;transform:scaleX(0.8917);">Speichern</div>
<svg class="a" style="left:484.75px;top:462.25px;" width="16.5" height="16.5" viewBox="0 0 16 16"><path d="M.6 .6h9.600L12.600 3V11.600H.6z" fill="#1976d2"/><rect x="3" y=".6" width="6" height="3.700" fill="#bbdefb"/><rect x="6.800" y="1.200" width="1.400" height="2.500" fill="#1976d2"/><rect x="2.400" y="6.200" width="8.400" height="5.400" fill="#fff"/><path d="M7.300 10.800 12.200 15.500 7.300 15.500 9.750 13.150z" fill="#fff" opacity="0"/><path d="M8.600 8.800 15.200 15.400M15.200 8.800 8.600 15.400" stroke="#fff" stroke-width="3.200"/><path d="M8.600 8.800 15.200 15.400M15.200 8.800 8.600 15.400" stroke="#3949ab" stroke-width="1.700"/></svg>
<div class="t" style="left:508.3px;top:465px;font-size:13px;line-height:13px;color:#222;transform:scaleX(0.8938);">Speichern und schließen</div>
<svg class="a" style="left:653.20px;top:462.80px;" width="15" height="15" viewBox="0 0 16 16"><circle cx="8" cy="8" r="7.6" fill="#388e3c"/><path d="M8 3.8v8.4M3.8 8h8.4" stroke="#fff" stroke-width="2.2"/></svg>
<div class="t" style="left:676px;top:465px;font-size:13px;line-height:13px;color:#222;transform:scaleX(0.8968);">Neuanlage</div>
<svg class="a" style="left:747.45px;top:461.75px;" width="16.5" height="16.5" viewBox="0 0 16 16"><path d="M2.800 4.800h10.400l-.8 10.400H3.600z" fill="#e53935"/><path d="M1.600 2.400h12.800v1.900H1.600z" fill="#e53935"/><rect x="5.600" y=".8" width="4.800" height="2" fill="#e53935"/><path d="M5.700 6.300v7.400M8 6.300v7.400M10.300 6.300v7.400" stroke="#ffcdd2" stroke-width="1" opacity=".9"/></svg>
<svg class="a" style="left:773.20px;top:466.50px;" width="8" height="8" viewBox="0 0 8 8"><path d="M0 2.2h8L4 6z" fill="#283593"/></svg>
<svg class="a" style="left:790.20px;top:462.00px;" width="16" height="16" viewBox="0 0 16 16"><g opacity="1"><rect x="1.5" y="1.5" width="8" height="10" fill="#eee" stroke="#777"/><rect x="4.5" y="4" width="8" height="10.5" fill="#fafafa" stroke="#666"/><path d="M6 7h5M6 9h5M6 11h3" stroke="#888" stroke-width=".8"/><circle cx="12" cy="12.5" r="3.3" fill="#43a047"/><path d="M12 10.5v4M10 12.5h4" stroke="#fff" stroke-width="1.2"/></g></svg>
<svg class="a" style="left:815.30px;top:466.50px;" width="8" height="8" viewBox="0 0 8 8"><path d="M0 2.2h8L4 6z" fill="#283593"/></svg>
<svg class="a" style="left:831.30px;top:461.00px;" width="17" height="17" viewBox="0 0 16 16"><path d="M13.800 9.400A6 6 0 1 1 11.400 3.300" fill="none" stroke="#2f4899" stroke-width="2.100"/><path d="M9.200 .2 15 .8 13.400 6.400z" fill="#2f4899"/></svg>
<div class="a" style="left:862px;top:464px;width:1px;height:11px;background:repeating-linear-gradient(to bottom,#2f4899 0,#2f4899 1px,transparent 1px,transparent 2px)"></div>
<svg class="a" style="left:879.00px;top:462.80px;" width="14" height="14" viewBox="0 0 16 16"><path d="M1 3.5h14M1 8h14M1 12.5h14" stroke="#2f4899" stroke-width="2"/></svg>
<svg class="a" style="left:910.70px;top:464.50px;" width="11" height="11" viewBox="0 0 12 12"><path d="M2 6 9.5 .5V11.5z" fill="#c5cae9" transform="rotate(0 6 6)"/></svg>
<svg class="a" style="left:932.10px;top:466.50px;" width="8" height="8" viewBox="0 0 8 8"><path d="M0 2.2h8L4 6z" fill="#c5cae9"/></svg>
<svg class="a" style="left:951.70px;top:464.50px;" width="11" height="11" viewBox="0 0 12 12"><path d="M2 6 9.5 .5V11.5z" fill="#283593" transform="rotate(180 6 6)"/></svg>
<svg class="a" style="left:974.20px;top:466.50px;" width="8" height="8" viewBox="0 0 8 8"><path d="M0 2.2h8L4 6z" fill="#283593"/></svg>
<svg class="a" style="left:991.50px;top:462.00px;" width="15" height="16" viewBox="0 0 15 16"><rect x="1" y="2.5" width="10" height="12" rx="1" fill="#fff" stroke="#455a64" stroke-width="1.1"/><rect x="3.6" y="1" width="4.8" height="2.6" fill="#90a4ae"/><path d="M3 7h6M3 9.2h6" stroke="#90a4ae" stroke-width=".9"/><circle cx="10.8" cy="12" r="3.6" fill="#43a047"/><path d="M9 12l1.4 1.5L12.8 10.7" fill="none" stroke="#fff" stroke-width="1.1"/></svg>
<svg class="a" style="left:1020.40px;top:462.50px;" width="16" height="15" viewBox="0 0 16 15"><g opacity=".55"><rect x="5" y="1" width="10.5" height="13" fill="#64b5f6"/><rect x="0.5" y="3.5" width="9" height="9" fill="#1976d2"/><circle cx="5" cy="8" r="2.4" fill="none" stroke="#fff" stroke-width="1.3"/></g></svg>
<svg class="a" style="left:1050.70px;top:464.50px;" width="16" height="11" viewBox="0 0 16 11"><rect x=".6" y=".6" width="14.8" height="9.8" rx="1" fill="#e0e0e0" stroke="#9e9e9e" stroke-width="1"/><path d="M1 1.2 8 6.4 15 1.2" fill="none" stroke="#9e9e9e" stroke-width="1"/></svg>
<svg class="a" style="left:1075.00px;top:466.50px;" width="8" height="8" viewBox="0 0 8 8"><path d="M0 2.2h8L4 6z" fill="#283593"/></svg>
<svg class="a" style="left:1093.00px;top:462.00px;" width="16" height="16" viewBox="0 0 16 16"><rect x="1" y="1.5" width="11" height="10" fill="#fff" stroke="#9e9e9e" stroke-width=".6"/><rect x="1" y="1.5" width="11" height="3" fill="#e53935"/><path d="M3 6.8h7M3 8.8h7" stroke="#ffb74d" stroke-width="1.4" stroke-dasharray="1.6 .8"/><circle cx="11" cy="9.3" r="2.3" fill="#f5c27a"/><path d="M6.5 16q0-4.5 4.5-4.5T15.5 16z" fill="#37474f"/></svg>
<svg class="a" style="left:1122.20px;top:462.50px;" width="15" height="15" viewBox="0 0 16 16"><g opacity="1"><rect x="3.5" y="1.5" width="9" height="4" fill="#eee" stroke="#616161" stroke-width=".8"/><rect x="1" y="5" width="14" height="7" rx="1.5" fill="#616161"/><rect x="3.5" y="9" width="9" height="5.5" fill="#fafafa" stroke="#424242" stroke-width=".8"/><path d="M5 11h6M5 12.8h6" stroke="#616161" stroke-width=".8"/></g></svg>
<svg class="a" style="left:1147.00px;top:466.50px;" width="8" height="8" viewBox="0 0 8 8"><path d="M0 2.2h8L4 6z" fill="#283593"/></svg>
<svg class="a" style="left:1163.50px;top:462.00px;" width="16" height="16" viewBox="0 0 16 16"><g transform="rotate(45 8 8)"><path d="M5.2 12.5V4.6a2.8 2.8 0 0 1 5.6 0v8.2a1.9 1.9 0 0 1-3.8 0V5.2a.95.95 0 0 1 1.9 0v7" fill="none" stroke="#3f51b5" stroke-width="1.1"/></g></svg>
<svg class="a" style="left:1195.20px;top:462.00px;" width="13" height="16" viewBox="0 0 13 16"><path d="M.5 .5h8.5l3.5 3.5V15.5H.5z" fill="#1976d2"/><path d="M9 .5V4h3.5z" fill="#90caf9"/><text x="3" y="12.5" font-family="Liberation Sans" font-weight="700" font-size="6.5" fill="#fff">W</text></svg>
<div class="a" style="left:1224px;top:464px;width:1px;height:11px;background:repeating-linear-gradient(to bottom,#2f4899 0,#2f4899 1px,transparent 1px,transparent 2px)"></div>
<svg class="a" style="left:1239.70px;top:461.50px;" width="16" height="16" viewBox="0 0 16 16"><g opacity="1"><path d="M4.6 7V5a3.4 3.4 0 0 1 6.8 0v2" fill="none" stroke="#555" stroke-width="1.7"/><rect x="2" y="6.8" width="12" height="8.4" rx="1" fill="#fdd835"/><circle cx="8" cy="10.2" r="1.2" fill="#6d4c00"/><rect x="7.4" y="10.5" width="1.2" height="2.7" fill="#6d4c00"/></g></svg>
<svg class="a" style="left:1264.00px;top:466.50px;" width="8" height="8" viewBox="0 0 8 8"><path d="M0 2.2h8L4 6z" fill="#283593"/></svg>
<svg class="a" style="left:1282.50px;top:462.00px;" width="16" height="16" viewBox="0 0 16 16"><path d="M2.5 .8h7.5q1.5 0 1.5 1.5V13L7 10.6 2.5 13z" fill="#1e88e5"/><circle cx="11.8" cy="11.8" r="4" fill="#2e7d32" stroke="#fff" stroke-width=".7"/><path d="M11.8 9.400v4.800M9.400 11.800h4.800" stroke="#fff" stroke-width="1.300"/></svg>
<svg class="a" style="left:1311.50px;top:462.50px;" width="15" height="15" viewBox="0 0 16 16"><path d="M8 1.6 9.9 6l4.7.4-3.6 3.1 1.1 4.6L8 11.7 3.9 14.1 5 9.5 1.4 6.4 6.1 6z" fill="none" stroke="#1e88e5" stroke-width="1.5" stroke-linejoin="miter"/></svg>
<svg class="a" style="left:393.50px;top:497.00px;" width="25" height="32" viewBox="0 0 25 32"><rect x="1.200" y="5.200" width="22.400" height="25.600" rx="2.200" fill="#fff" stroke="#37474f" stroke-width="2.200"/><path d="M5.600 8.600V5.800Q5.600 4.400 7 4.400H18Q19.400 4.400 19.400 5.800V8.600z" fill="#90a4ae"/><circle cx="12.500" cy="3.400" r="2.300" fill="#fff" stroke="#90a4ae" stroke-width="1.700"/><path d="M5.400 19.400 10.600 24.800 19.200 13.800" fill="none" stroke="#4caf50" stroke-width="3.300"/></svg>
<div class="t" style="left:432.5px;top:499px;font-size:13px;line-height:13px;color:#222;transform:scaleX(1.0154);">Aktivitäten</div>
<div class="t" style="left:432.5px;top:517px;font-size:14.5px;line-height:14.5px;color:#111;transform:scaleX(1.0181);-webkit-text-stroke:0.2px #111;">Vorgang #ALLG-0000005: Nobelpreisverleihung, 09.08.2022 12:59, INSTITUT RADIUM PARIS</div>
<div class="a" style="left:391px;top:550px;width:810px;height:298px;background:#fdfdfd;box-shadow:0 1px 1.5px rgba(0,0,0,.30),0 0 1px rgba(0,0,0,.10);"></div>
<div class="a" style="left:391px;top:586.5px;width:810px;height:1px;background:#e0e0e0;"></div>
<div class="a" style="left:391px;top:583.3px;width:96px;height:3.6px;background:#2f4899;"></div>
<div class="t" style="left:409.5px;top:563px;font-size:12.5px;line-height:12.5px;color:#222;transform:scaleX(0.8224);">ÜBERSICHT</div>
<div class="t" style="left:507.9px;top:563px;font-size:12.5px;line-height:12.5px;color:#777;transform:scaleX(0.8227);">DETAILS</div>
<div class="t" style="left:589px;top:563px;font-size:12.5px;line-height:12.5px;color:#777;transform:scaleX(0.8838);">KAMPAGNE</div>
<div class="t" style="left:689.5px;top:563px;font-size:12.5px;line-height:12.5px;color:#777;transform:scaleX(0.8822);">DS-GVO</div>
<div class="t" style="left:408px;top:610px;font-size:12.5px;line-height:12.5px;color:#555;transform:scaleX(0.9701);">Betreff</div>
<div class="a" style="left:528px;top:603px;width:656px;height:24px;background:#fff;border:1px solid #d9d9d9;box-sizing:border-box;border-radius:2px;"></div>
<div class="t" style="left:535.1px;top:610px;font-size:12.5px;line-height:12.5px;color:#222;transform:scaleX(0.9427);">Vorgang</div>
<div class="t" style="left:584.2px;top:610px;font-size:12.5px;line-height:12.5px;color:#222;transform:scaleX(0.8980);">#ALLG-0000005:</div>
<div class="t" style="left:674px;top:610px;font-size:12.5px;line-height:12.5px;color:#222;transform:scaleX(0.9572);">Nobelpreisverleihung</div>
<div class="a" style="left:581px;top:601px;width:93px;height:30px;border:4px solid #ff0000;box-sizing:border-box;box-shadow:0 0 0 1px rgba(248,255,255,.85),inset 0 0 0 1px rgba(248,255,255,.7);"></div>
<div class="t" style="left:408px;top:640px;font-size:12.5px;line-height:12.5px;color:#555;transform:scaleX(1.0330);">Art</div>
<div class="a" style="left:528px;top:633px;width:656px;height:24px;background:#fff;border:1px solid #d9d9d9;box-sizing:border-box;border-radius:2px;"></div>
<svg class="a" style="left:533.90px;top:638.00px;" width="14" height="14" viewBox="0 0 16 16"><path d="M8 1.2a1 1 0 0 1 1 1v.5c2.2.6 3.3 2.4 3.3 4.6v3.2l1.4 1.8v.7H2.3v-.7l1.4-1.8V7.3c0-2.2 1.1-4 3.3-4.6v-.5a1 1 0 0 1 1-1z" fill="#ffb01f"/><path d="M6.3 13.8h3.4a1.7 1.7 0 0 1-3.4 0z" fill="#ffb01f"/></svg>
<div class="t" style="left:555.4px;top:640px;font-size:12.5px;line-height:12.5px;color:#222;transform:scaleX(0.9330);">ERINNERUNG - Erinnerung (Kein Abgleich mit Groupware)</div>
<svg class="a" style="left:1142.70px;top:642.25px;" width="11" height="5.5" viewBox="0 0 12 6"><path d="M0 0h12L6 6z" fill="#828282"/></svg>
<svg class="a" style="left:1163.70px;top:639.00px;" width="12" height="12" viewBox="0 0 16 16"><circle cx="9.8" cy="6.2" r="4.2" fill="none" stroke="#808080" stroke-width="1.4"/><path d="M6.8 9.2 1.8 14.2" stroke="#808080" stroke-width="2.0" stroke-linecap="round"/></svg>
<div class="t" style="left:408px;top:670px;font-size:12.5px;line-height:12.5px;color:#555;transform:scaleX(1.0082);">Ort</div>
<div class="a" style="left:528px;top:663px;width:656px;height:24px;background:#fff;border:1px solid #d9d9d9;box-sizing:border-box;border-radius:2px;"></div>
<div class="t" style="left:535.1px;top:670px;font-size:12.5px;line-height:12.5px;color:#222;transform:scaleX(0.9195);white-space:pre;">Rue des Nourrices  75000 Paris</div>
<svg class="a" style="left:1164.00px;top:669.00px;" width="12" height="12" viewBox="0 0 16 16"><circle cx="9.8" cy="6.2" r="4.2" fill="none" stroke="#808080" stroke-width="1.4"/><path d="M6.8 9.2 1.8 14.2" stroke="#808080" stroke-width="2.0" stroke-linecap="round"/></svg>
<svg class="a" style="left:1168.00px;top:680.00px;" width="8" height="2" viewBox="0 0 8 2"><path d="M0 1h8" stroke="#666" stroke-width="1" stroke-dasharray="1 1"/></svg>
<div class="t" style="left:408px;top:708px;font-size:12.5px;line-height:12.5px;color:#555;transform:scaleX(0.9378);">Beginn</div>
<div class="a" style="left:528px;top:701px;width:84px;height:24px;background:#fff;border:1px solid #d9d9d9;box-sizing:border-box;border-radius:2px;"></div>
<div class="t" style="left:535.1px;top:708px;font-size:12.5px;line-height:12.5px;color:#222;transform:scaleX(0.9000);">09.08.2022</div>
<svg class="a" style="left:618.00px;top:706.40px;" width="10.4" height="13.0" viewBox="0 0 13 15"><rect x=".6" y="2.200" width="11.800" height="12.200" fill="#fafafa" stroke="#a6a6a6" stroke-width=".9"/><rect x=".6" y="2.200" width="11.800" height="3" fill="#b4b4b4"/><path d="M4.400 5.200V14.400M8.600 5.200V14.400M.6 8.300h11.800M.6 11.300h11.800" stroke="#b0b0b0" stroke-width=".9"/><path d="M3.300 .8v2.600M6.500 .8v2.600M9.700 .8v2.600" stroke="#8c8c8c" stroke-width="1.200"/></svg>
<div class="a" style="left:633px;top:701px;width:50px;height:24px;background:#fff;border:1px solid #d9d9d9;box-sizing:border-box;border-radius:2px;"></div>
<div class="t" style="left:640.8px;top:708px;font-size:12.5px;line-height:12.5px;color:#222;transform:scaleX(0.8696);">12:59</div>
<div class="t" style="left:408px;top:738px;font-size:12.5px;line-height:12.5px;color:#555;transform:scaleX(0.9078);">Ende</div>
<div class="a" style="left:528px;top:731px;width:84px;height:24px;background:#fff;border:1px solid #d9d9d9;box-sizing:border-box;border-radius:2px;"></div>
<div class="t" style="left:535.1px;top:738px;font-size:12.5px;line-height:12.5px;color:#222;transform:scaleX(0.9000);">09.08.2022</div>
<svg class="a" style="left:618.00px;top:736.30px;" width="10.4" height="13.0" viewBox="0 0 13 15"><rect x=".6" y="2.200" width="11.800" height="12.200" fill="#fafafa" stroke="#a6a6a6" stroke-width=".9"/><rect x=".6" y="2.200" width="11.800" height="3" fill="#b4b4b4"/><path d="M4.400 5.200V14.400M8.600 5.200V14.400M.6 8.300h11.800M.6 11.300h11.800" stroke="#b0b0b0" stroke-width=".9"/><path d="M3.300 .8v2.600M6.500 .8v2.600M9.700 .8v2.600" stroke="#8c8c8c" stroke-width="1.200"/></svg>
<div class="a" style="left:633px;top:731px;width:50px;height:24px;background:#fff;border:1px solid #d9d9d9;box-sizing:border-box;border-radius:2px;"></div>
<div class="t" style="left:640.8px;top:738px;font-size:12.5px;line-height:12.5px;color:#222;transform:scaleX(0.8696);">12:59</div>
<div class="t" style="left:408px;top:767px;font-size:12.5px;line-height:12.5px;color:#555;transform:scaleX(0.9487);">Erinnerungsdatum</div>
<div class="a" style="left:528px;top:760px;width:84px;height:24px;background:#fff;border:1px solid #d9d9d9;box-sizing:border-box;border-radius:2px;"></div>
<div class="t" style="left:535.1px;top:767px;font-size:12.5px;line-height:12.5px;color:#222;transform:scaleX(0.9000);">09.08.2022</div>
<svg class="a" style="left:618.00px;top:765.40px;" width="10.4" height="13.0" viewBox="0 0 13 15"><rect x=".6" y="2.200" width="11.800" height="12.200" fill="#fafafa" stroke="#a6a6a6" stroke-width=".9"/><rect x=".6" y="2.200" width="11.800" height="3" fill="#b4b4b4"/><path d="M4.400 5.200V14.400M8.600 5.200V14.400M.6 8.300h11.800M.6 11.300h11.800" stroke="#b0b0b0" stroke-width=".9"/><path d="M3.300 .8v2.600M6.500 .8v2.600M9.700 .8v2.600" stroke="#8c8c8c" stroke-width="1.200"/></svg>
<div class="a" style="left:633px;top:760px;width:50px;height:24px;background:#fff;border:1px solid #d9d9d9;box-sizing:border-box;border-radius:2px;"></div>
<div class="t" style="left:640.8px;top:767px;font-size:12.5px;line-height:12.5px;color:#222;transform:scaleX(0.8696);">12:44</div>
<div class="t" style="left:410.3px;top:811px;font-size:14.5px;line-height:14.5px;color:#222;transform:scaleX(0.9372);">Beschreibung</div>
<svg class="a" style="left:1170.80px;top:812.00px;" width="12" height="12" viewBox="0 0 16 16"><path d="M2 4.5 8 10.5 14 4.5" fill="none" stroke="#a8a8a8" stroke-width="2.7" transform="rotate(0 8 8)"/></svg>
<div class="a" style="left:1223.2px;top:550px;width:509.7px;height:120px;background:#fdfdfd;box-shadow:0 1px 1.5px rgba(0,0,0,.30),0 0 1px rgba(0,0,0,.10);"></div>
<div class="t" style="left:1240.4px;top:568px;font-size:14.5px;line-height:14.5px;color:#222;transform:scaleX(0.9561);">Priorität und Status</div>
<svg class="a" style="left:1705.00px;top:569.50px;" width="12" height="12" viewBox="0 0 16 16"><path d="M2 4.5 8 10.5 14 4.5" fill="none" stroke="#a8a8a8" stroke-width="2.7" transform="rotate(180 8 8)"/></svg>
<div class="t" style="left:1240.4px;top:606px;font-size:12.5px;line-height:12.5px;color:#555;transform:scaleX(0.9660);">Priorität</div>
<div class="a" style="left:1366px;top:599px;width:350px;height:24px;background:#fff;border:1px solid #d9d9d9;box-sizing:border-box;border-radius:2px;"></div>
<svg class="a" style="left:1371.30px;top:603.30px;" width="15" height="15" viewBox="0 0 16 16"><path d="M3 1v14" stroke="#b71c1c" stroke-width="1.4"/><path d="M3.6 1.5 14 5.6 3.6 9.8z" fill="#f4511e"/></svg>
<div class="t" style="left:1393.2px;top:606px;font-size:12.5px;line-height:12.5px;color:#222;transform:scaleX(0.9715);">A - Heute!</div>
<svg class="a" style="left:1675.20px;top:608.25px;" width="11" height="5.5" viewBox="0 0 12 6"><path d="M0 0h12L6 6z" fill="#828282"/></svg>
<svg class="a" style="left:1696.20px;top:605.00px;" width="12" height="12" viewBox="0 0 16 16"><circle cx="9.8" cy="6.2" r="4.2" fill="none" stroke="#808080" stroke-width="1.4"/><path d="M6.8 9.2 1.8 14.2" stroke="#808080" stroke-width="2.0" stroke-linecap="round"/></svg>
<div class="t" style="left:1240.4px;top:636px;font-size:12.5px;line-height:12.5px;color:#555;transform:scaleX(0.8918);">Status</div>
<div class="a" style="left:1366px;top:629px;width:350px;height:24px;background:#fff;border:1px solid #d9d9d9;box-sizing:border-box;border-radius:2px;"></div>
<svg class="a" style="left:1372.30px;top:634.50px;" width="13" height="13" viewBox="0 0 16 16"><circle cx="8" cy="8" r="6.6" fill="#fff" stroke="#64b5f6" stroke-width="1.3"/></svg>
<div class="t" style="left:1393.2px;top:636px;font-size:12.5px;line-height:12.5px;color:#222;transform:scaleX(0.9892);">O - Nicht begonnen / offen</div>
<svg class="a" style="left:1675.20px;top:638.25px;" width="11" height="5.5" viewBox="0 0 12 6"><path d="M0 0h12L6 6z" fill="#828282"/></svg>
<svg class="a" style="left:1696.20px;top:635.00px;" width="12" height="12" viewBox="0 0 16 16"><circle cx="9.8" cy="6.2" r="4.2" fill="none" stroke="#808080" stroke-width="1.4"/><path d="M6.8 9.2 1.8 14.2" stroke="#808080" stroke-width="2.0" stroke-linecap="round"/></svg>
<div class="a" style="left:1223.2px;top:688px;width:509.7px;height:52px;background:#fdfdfd;box-shadow:0 1px 1.5px rgba(0,0,0,.30),0 0 1px rgba(0,0,0,.10);"></div>
<div class="t" style="left:1240.4px;top:706px;font-size:14.5px;line-height:14.5px;color:#222;transform:scaleX(0.9376);">Beteiligte Personen</div>
<svg class="a" style="left:1705.00px;top:708.00px;" width="12" height="12" viewBox="0 0 16 16"><path d="M2 4.5 8 10.5 14 4.5" fill="none" stroke="#a8a8a8" stroke-width="2.7" transform="rotate(0 8 8)"/></svg>
<div class="a" style="left:1223.2px;top:757.7px;width:509.7px;height:52px;background:#fdfdfd;box-shadow:0 1px 1.5px rgba(0,0,0,.30),0 0 1px rgba(0,0,0,.10);"></div>
<div class="t" style="left:1240.4px;top:776px;font-size:14.5px;line-height:14.5px;color:#222;transform:scaleX(0.9440);">Projekt</div>
<svg class="a" style="left:1705.00px;top:778.00px;" width="12" height="12" viewBox="0 0 16 16"><path d="M2 4.5 8 10.5 14 4.5" fill="none" stroke="#a8a8a8" stroke-width="2.7" transform="rotate(0 8 8)"/></svg>
</body></html>
